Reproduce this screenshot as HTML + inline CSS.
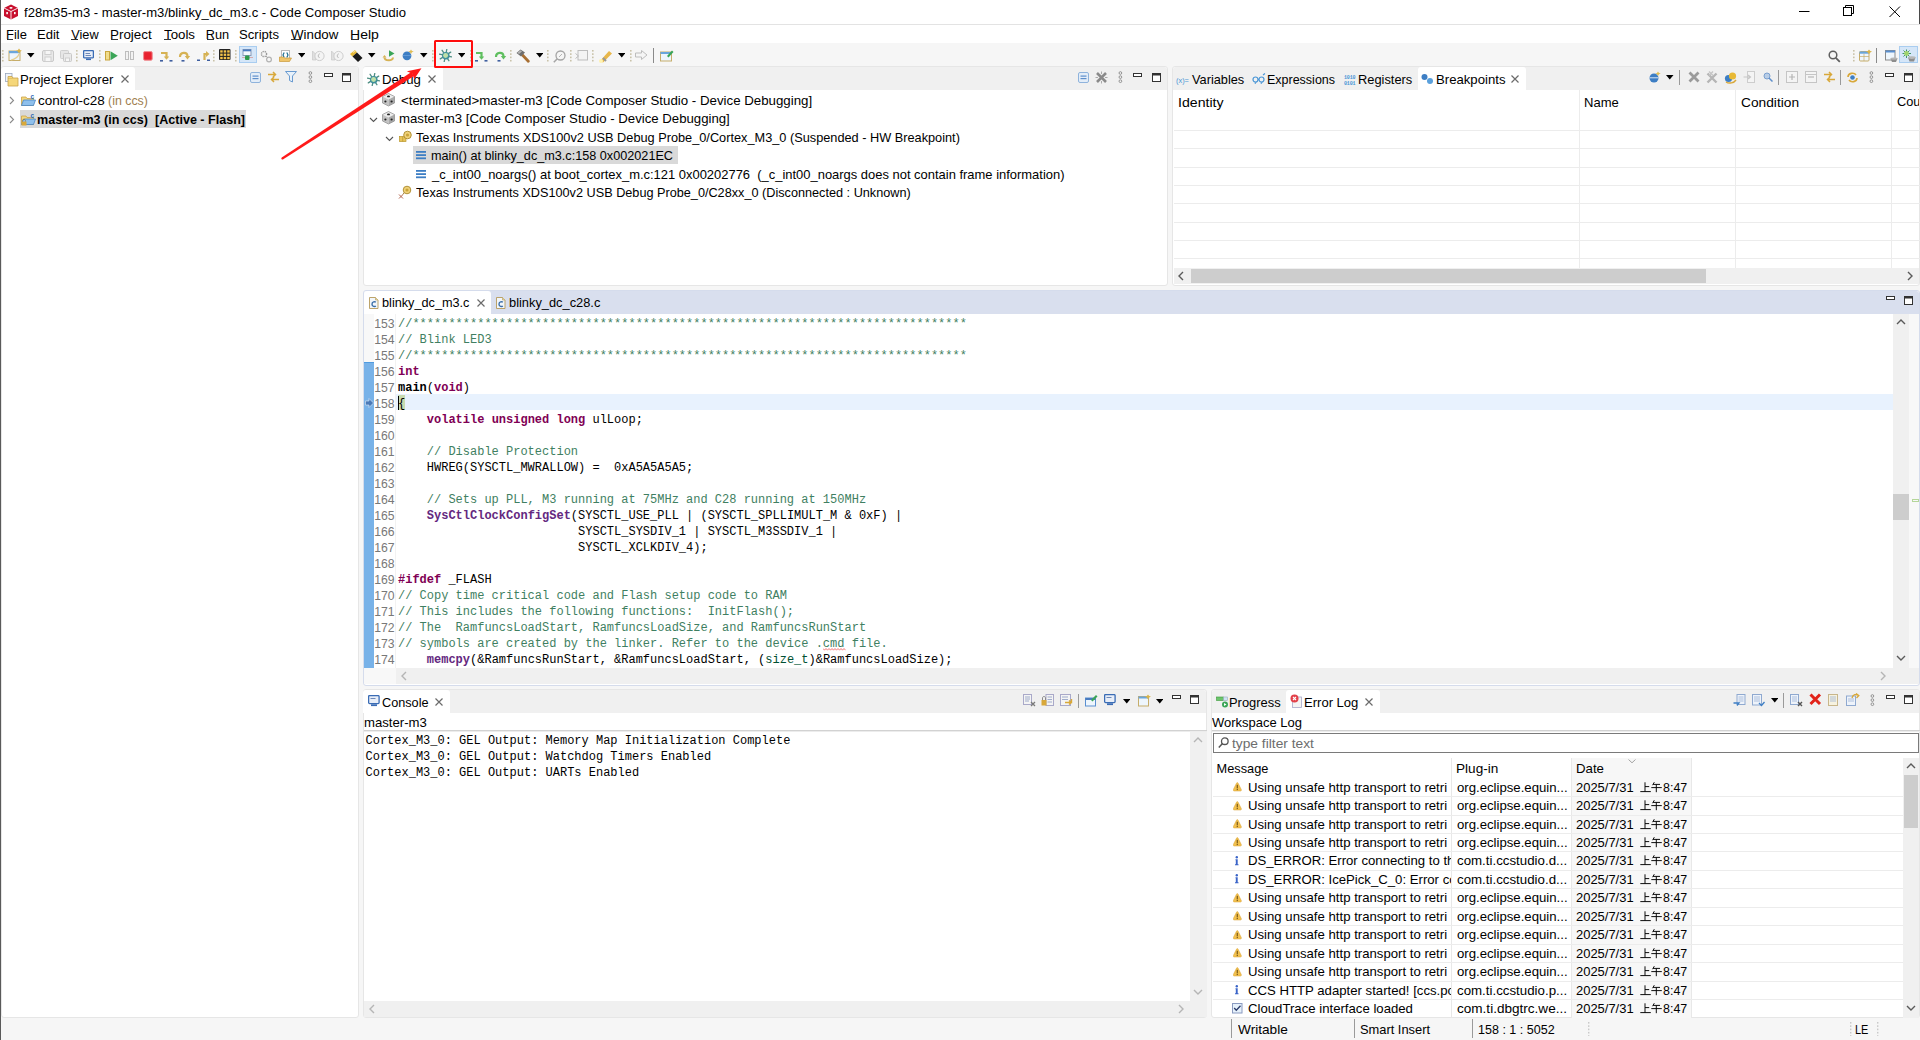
<!DOCTYPE html><html><head><meta charset="utf-8"><style>
*{margin:0;padding:0;box-sizing:border-box}
html,body{width:1920px;height:1040px;overflow:hidden;background:#f6f6f6;font-family:"Liberation Sans",sans-serif}
body>div, body>span, body>svg{position:absolute}
.t{position:absolute;white-space:pre}
</style></head><body><div style="left:0px;top:0px;width:1920px;height:24px;background:#fff"></div><div style="left:0px;top:24px;width:1920px;height:1px;background:#e3e3e3"></div><div style="left:0px;top:25px;width:1920px;height:18px;background:#fff"></div><div style="left:0px;top:43px;width:1920px;height:24px;background:#f6f6f6"></div><span class="t" style="left:24.00px;top:5.60px;font-size:13px;line-height:13px;color:#000;font-weight:400;font-family:'Liberation Sans', sans-serif;transform:scaleX(1.0069);transform-origin:0 0;">f28m35-m3 - master-m3/blinky_dc_m3.c - Code Composer Studio</span><span class="t" style="left:5.99px;top:28.61px;font-size:12.75px;line-height:12.75px;color:#000;font-weight:400;font-family:'Liberation Sans', sans-serif;transform:scaleX(1.0132);transform-origin:0 0;">File</span><span class="t" style="left:36.98px;top:28.61px;font-size:12.75px;line-height:12.75px;color:#000;font-weight:400;font-family:'Liberation Sans', sans-serif;transform:scaleX(1.0238);transform-origin:0 0;">Edit</span><span class="t" style="left:71.25px;top:28.61px;font-size:12.75px;line-height:12.75px;color:#000;font-weight:400;font-family:'Liberation Sans', sans-serif;transform:scaleX(1.0000);transform-origin:0 0;">View</span><span class="t" style="left:109.70px;top:28.61px;font-size:12.75px;line-height:12.75px;color:#000;font-weight:400;font-family:'Liberation Sans', sans-serif;transform:scaleX(1.0513);transform-origin:0 0;">Project</span><span class="t" style="left:163.75px;top:28.61px;font-size:12.75px;line-height:12.75px;color:#000;font-weight:400;font-family:'Liberation Sans', sans-serif;transform:scaleX(1.0417);transform-origin:0 0;">Tools</span><span class="t" style="left:205.75px;top:28.61px;font-size:12.75px;line-height:12.75px;color:#000;font-weight:400;font-family:'Liberation Sans', sans-serif;transform:scaleX(1.0000);transform-origin:0 0;">Run</span><span class="t" style="left:239.47px;top:28.61px;font-size:12.75px;line-height:12.75px;color:#000;font-weight:400;font-family:'Liberation Sans', sans-serif;transform:scaleX(1.0263);transform-origin:0 0;">Scripts</span><span class="t" style="left:291.25px;top:28.61px;font-size:12.75px;line-height:12.75px;color:#000;font-weight:400;font-family:'Liberation Sans', sans-serif;transform:scaleX(1.0435);transform-origin:0 0;">Window</span><span class="t" style="left:349.65px;top:28.61px;font-size:12.75px;line-height:12.75px;color:#000;font-weight:400;font-family:'Liberation Sans', sans-serif;transform:scaleX(1.1000);transform-origin:0 0;">Help</span><div style="left:1px;top:66px;width:358px;height:952px;background:#fff;border:1px solid #e6e6e6;border-radius:3px"></div><div style="left:2px;top:67px;width:356px;height:23px;background:#f0f0f0;border-radius:3px 3px 0 0"></div><div style="left:363px;top:66px;width:805px;height:220px;background:#fff;border:1px solid #e6e6e6;border-radius:3px"></div><div style="left:364px;top:67px;width:803px;height:23px;background:#f0f0f0;border-radius:3px 3px 0 0"></div><div style="left:1172px;top:66px;width:748px;height:220px;background:#fff;border:1px solid #e6e6e6;border-radius:3px"></div><div style="left:1173px;top:67px;width:746px;height:23px;background:#f0f0f0;border-radius:3px 3px 0 0"></div><div style="left:363px;top:290px;width:1557px;height:396px;background:#fff;border:1px solid #d5dcec;border-radius:3px"></div><div style="left:364px;top:291px;width:1555px;height:23px;background:#d9dfee;border-radius:3px 3px 0 0"></div><div style="left:363px;top:689px;width:844px;height:329px;background:#fff;border:1px solid #e6e6e6;border-radius:3px"></div><div style="left:364px;top:690px;width:842px;height:23px;background:#f0f0f0;border-radius:3px 3px 0 0"></div><div style="left:1211px;top:689px;width:709px;height:329px;background:#fff;border:1px solid #e6e6e6;border-radius:3px"></div><div style="left:1212px;top:690px;width:707px;height:23px;background:#f0f0f0;border-radius:3px 3px 0 0"></div><div style="left:1px;top:67px;width:134px;height:23px;background:#fff;border-radius:3px 3px 0 0"></div><span class="t" style="left:19.97px;top:74.21px;font-size:12.75px;line-height:12.75px;color:#000;font-weight:400;font-family:'Liberation Sans', sans-serif;transform:scaleX(1.0300);transform-origin:0 0;">Project Explorer</span><svg style="left:121px;top:75px" width="8" height="8" viewBox="0 0 8 8"><path d="M0.5 0.5L7.5 7.5M7.5 0.5L0.5 7.5" stroke="#6b6b6b" stroke-width="1.2"/></svg><div style="left:363px;top:67px;width:80px;height:23px;background:#fff;border-radius:3px 3px 0 0"></div><span class="t" style="left:381.97px;top:74.21px;font-size:12.75px;line-height:12.75px;color:#000;font-weight:400;font-family:'Liberation Sans', sans-serif;transform:scaleX(1.0333);transform-origin:0 0;">Debug</span><svg style="left:428px;top:75px" width="8" height="8" viewBox="0 0 8 8"><path d="M0.5 0.5L7.5 7.5M7.5 0.5L0.5 7.5" stroke="#6b6b6b" stroke-width="1.2"/></svg><span class="t" style="left:1192.00px;top:74.21px;font-size:12.75px;line-height:12.75px;color:#000;font-weight:400;font-family:'Liberation Sans', sans-serif;transform:scaleX(1.0000);transform-origin:0 0;">Variables</span><span class="t" style="left:1267.42px;top:74.21px;font-size:12.75px;line-height:12.75px;color:#000;font-weight:400;font-family:'Liberation Sans', sans-serif;transform:scaleX(0.9794);transform-origin:0 0;">Expressions</span><span class="t" style="left:1358.39px;top:74.21px;font-size:12.75px;line-height:12.75px;color:#000;font-weight:400;font-family:'Liberation Sans', sans-serif;transform:scaleX(1.0075);transform-origin:0 0;">Registers</span><div style="left:1418px;top:67px;width:108px;height:23px;background:#fff;border-radius:3px 3px 0 0"></div><span class="t" style="left:1435.57px;top:74.21px;font-size:12.75px;line-height:12.75px;color:#000;font-weight:400;font-family:'Liberation Sans', sans-serif;transform:scaleX(1.0318);transform-origin:0 0;">Breakpoints</span><svg style="left:1511px;top:75px" width="8" height="8" viewBox="0 0 8 8"><path d="M0.5 0.5L7.5 7.5M7.5 0.5L0.5 7.5" stroke="#6b6b6b" stroke-width="1.2"/></svg><div style="left:364px;top:291px;width:127px;height:23px;background:#fff;border-radius:3px 3px 0 0"></div><span class="t" style="left:382.00px;top:297.41px;font-size:12.75px;line-height:12.75px;color:#000;font-weight:400;font-family:'Liberation Sans', sans-serif;transform:scaleX(0.9954);transform-origin:0 0;">blinky_dc_m3.c</span><svg style="left:476.6px;top:298.7px" width="8" height="8" viewBox="0 0 8 8"><path d="M0.5 0.5L7.5 7.5M7.5 0.5L0.5 7.5" stroke="#6b6b6b" stroke-width="1.2"/></svg><span class="t" style="left:508.99px;top:297.41px;font-size:12.75px;line-height:12.75px;color:#000;font-weight:400;font-family:'Liberation Sans', sans-serif;transform:scaleX(1.0067);transform-origin:0 0;">blinky_dc_c28.c</span><div style="left:363px;top:690px;width:87px;height:23px;background:#fff;border-radius:3px 3px 0 0"></div><span class="t" style="left:382.00px;top:697.21px;font-size:12.75px;line-height:12.75px;color:#000;font-weight:400;font-family:'Liberation Sans', sans-serif;transform:scaleX(0.9947);transform-origin:0 0;">Console</span><svg style="left:435px;top:698px" width="8" height="8" viewBox="0 0 8 8"><path d="M0.5 0.5L7.5 7.5M7.5 0.5L0.5 7.5" stroke="#6b6b6b" stroke-width="1.2"/></svg><span class="t" style="left:1228.99px;top:697.21px;font-size:12.75px;line-height:12.75px;color:#000;font-weight:400;font-family:'Liberation Sans', sans-serif;transform:scaleX(1.0120);transform-origin:0 0;">Progress</span><div style="left:1286px;top:690px;width:94px;height:23px;background:#fff;border-radius:3px 3px 0 0"></div><span class="t" style="left:1303.98px;top:697.21px;font-size:12.75px;line-height:12.75px;color:#000;font-weight:400;font-family:'Liberation Sans', sans-serif;transform:scaleX(1.0231);transform-origin:0 0;">Error Log</span><svg style="left:1365px;top:698px" width="8" height="8" viewBox="0 0 8 8"><path d="M0.5 0.5L7.5 7.5M7.5 0.5L0.5 7.5" stroke="#6b6b6b" stroke-width="1.2"/></svg><span class="t" style="left:38.20px;top:95.21px;font-size:12.75px;line-height:12.75px;color:#000;font-weight:400;font-family:'Liberation Sans', sans-serif;transform:scaleX(1.0587);transform-origin:0 0;">control-c28</span><span class="t" style="left:108.43px;top:95.21px;font-size:12.75px;line-height:12.75px;color:#a08050;font-weight:400;font-family:'Liberation Sans', sans-serif;transform:scaleX(0.9725);transform-origin:0 0;">(in ccs)</span><div style="left:20px;top:110px;width:226px;height:18px;background:#d9d9d9"></div><span class="t" style="left:37.21px;top:113.71px;font-size:12.75px;line-height:12.75px;color:#000;font-weight:700;font-family:'Liberation Sans', sans-serif;transform:scaleX(0.9852);transform-origin:0 0;">master-m3 (in ccs)  [Active - Flash]</span><span class="t" style="left:401.00px;top:94.71px;font-size:12.75px;line-height:12.75px;color:#000;font-weight:400;font-family:'Liberation Sans', sans-serif;transform:scaleX(1.0416);transform-origin:0 0;">&lt;terminated&gt;master-m3 [Code Composer Studio - Device Debugging]</span><span class="t" style="left:398.77px;top:113.21px;font-size:12.75px;line-height:12.75px;color:#000;font-weight:400;font-family:'Liberation Sans', sans-serif;transform:scaleX(1.0349);transform-origin:0 0;">master-m3 [Code Composer Studio - Device Debugging]</span><span class="t" style="left:416.00px;top:131.71px;font-size:12.75px;line-height:12.75px;color:#000;font-weight:400;font-family:'Liberation Sans', sans-serif;transform:scaleX(0.9993);transform-origin:0 0;">Texas Instruments XDS100v2 USB Debug Probe_0/Cortex_M3_0 (Suspended - HW Breakpoint)</span><div style="left:413px;top:146px;width:265px;height:18px;background:#d9d9d9"></div><span class="t" style="left:430.51px;top:150.21px;font-size:12.75px;line-height:12.75px;color:#000;font-weight:400;font-family:'Liberation Sans', sans-serif;transform:scaleX(0.9926);transform-origin:0 0;">main() at blinky_dc_m3.c:158 0x002021EC</span><span class="t" style="left:431.50px;top:168.71px;font-size:12.75px;line-height:12.75px;color:#000;font-weight:400;font-family:'Liberation Sans', sans-serif;transform:scaleX(1.0152);transform-origin:0 0;">_c_int00_noargs() at boot_cortex_m.c:121 0x00202776  (_c_int00_noargs does not contain frame information)</span><span class="t" style="left:416.00px;top:187.21px;font-size:12.75px;line-height:12.75px;color:#000;font-weight:400;font-family:'Liberation Sans', sans-serif;transform:scaleX(0.9944);transform-origin:0 0;">Texas Instruments XDS100v2 USB Debug Probe_0/C28xx_0 (Disconnected : Unknown)</span><div style="left:1174px;top:130px;width:746px;height:1px;background:#ececec"></div><div style="left:1174px;top:148.4px;width:746px;height:1px;background:#ececec"></div><div style="left:1174px;top:166.7px;width:746px;height:1px;background:#ececec"></div><div style="left:1174px;top:185px;width:746px;height:1px;background:#ececec"></div><div style="left:1174px;top:203.3px;width:746px;height:1px;background:#ececec"></div><div style="left:1174px;top:221.7px;width:746px;height:1px;background:#ececec"></div><div style="left:1174px;top:240px;width:746px;height:1px;background:#ececec"></div><div style="left:1174px;top:258.4px;width:746px;height:1px;background:#ececec"></div><div style="left:1579px;top:90px;width:1px;height:178px;background:#ececec"></div><div style="left:1735px;top:90px;width:1px;height:178px;background:#ececec"></div><div style="left:1891px;top:90px;width:1px;height:178px;background:#ececec"></div><span class="t" style="left:1177.89px;top:96.81px;font-size:12.75px;line-height:12.75px;color:#000;font-weight:400;font-family:'Liberation Sans', sans-serif;transform:scaleX(1.1075);transform-origin:0 0;">Identity</span><span class="t" style="left:1584.28px;top:96.81px;font-size:12.75px;line-height:12.75px;color:#000;font-weight:400;font-family:'Liberation Sans', sans-serif;transform:scaleX(1.0212);transform-origin:0 0;">Name</span><span class="t" style="left:1741.00px;top:96.81px;font-size:12.75px;line-height:12.75px;color:#000;font-weight:400;font-family:'Liberation Sans', sans-serif;transform:scaleX(1.0774);transform-origin:0 0;">Condition</span><div style="left:1891px;top:90px;width:28px;height:40px;overflow:hidden"><span class="t" style="left:6px;top:5.5px;font-size:12.75px;line-height:12.75px">Count</span></div><div style="left:1174px;top:268px;width:745px;height:16px;background:#f0f0f0"></div><div style="left:1191px;top:269px;width:515px;height:14px;background:#cdcdcd"></div><div style="left:364px;top:314px;width:10px;height:354px;background:#f8f8f8"></div><div style="left:364px;top:362px;width:10px;height:306px;background:#78b2e8"></div><div style="left:364px;top:362px;width:10px;height:1px;background:#4f9be0"></div><div style="left:374px;top:314px;width:22px;height:354px;background:#fff"></div><div style="left:395px;top:314px;width:1px;height:354px;background:#f2f2f2"></div><div style="left:396px;top:394px;width:1497px;height:16px;background:#e8f2fe"></div><div style="left:1893px;top:314px;width:16px;height:354px;background:#f0f0f0"></div><div style="left:1909px;top:314px;width:10px;height:354px;background:#f8f8f8"></div><div style="left:1893px;top:494px;width:16px;height:26px;background:#cdcdcd"></div><div style="left:364px;top:668px;width:1555px;height:16px;background:#f0f0f0"></div><div style="left:364px;top:668px;width:32px;height:16px;background:#f8f8f8"></div><div style="left:398px;top:395px;width:7px;height:15px;background:#c7dbb0"></div><span class="t" style="left:340px;width:54.6px;text-align:right;top:318.10px;font-size:12.2px;line-height:12.2px;color:#787878;font-family:'Liberation Sans', sans-serif">153</span><span class="t" style="left:398px;top:316.20px;font-size:12px;line-height:16px;font-family:'Liberation Mono', monospace;color:#000"><span style="color:#3f7f62;font-weight:400">//*****************************************************************************</span></span><span class="t" style="left:340px;width:54.6px;text-align:right;top:334.10px;font-size:12.2px;line-height:12.2px;color:#787878;font-family:'Liberation Sans', sans-serif">154</span><span class="t" style="left:398px;top:332.20px;font-size:12px;line-height:16px;font-family:'Liberation Mono', monospace;color:#000"><span style="color:#3f7f62;font-weight:400">// Blink LED3</span></span><span class="t" style="left:340px;width:54.6px;text-align:right;top:350.10px;font-size:12.2px;line-height:12.2px;color:#787878;font-family:'Liberation Sans', sans-serif">155</span><span class="t" style="left:398px;top:348.20px;font-size:12px;line-height:16px;font-family:'Liberation Mono', monospace;color:#000"><span style="color:#3f7f62;font-weight:400">//*****************************************************************************</span></span><span class="t" style="left:340px;width:54.6px;text-align:right;top:366.10px;font-size:12.2px;line-height:12.2px;color:#787878;font-family:'Liberation Sans', sans-serif">156</span><span class="t" style="left:398px;top:364.20px;font-size:12px;line-height:16px;font-family:'Liberation Mono', monospace;color:#000"><span style="color:#7f0055;font-weight:700">int</span></span><span class="t" style="left:340px;width:54.6px;text-align:right;top:382.10px;font-size:12.2px;line-height:12.2px;color:#787878;font-family:'Liberation Sans', sans-serif">157</span><span class="t" style="left:398px;top:380.20px;font-size:12px;line-height:16px;font-family:'Liberation Mono', monospace;color:#000"><span style="color:#000;font-weight:700">main</span><span style="color:#000;font-weight:400">(</span><span style="color:#7f0055;font-weight:700">void</span><span style="color:#000;font-weight:400">)</span></span><span class="t" style="left:340px;width:54.6px;text-align:right;top:398.10px;font-size:12.2px;line-height:12.2px;color:#787878;font-family:'Liberation Sans', sans-serif">158</span><span class="t" style="left:398px;top:396.20px;font-size:12px;line-height:16px;font-family:'Liberation Mono', monospace;color:#000">{</span><span class="t" style="left:340px;width:54.6px;text-align:right;top:414.10px;font-size:12.2px;line-height:12.2px;color:#787878;font-family:'Liberation Sans', sans-serif">159</span><span class="t" style="left:398px;top:412.20px;font-size:12px;line-height:16px;font-family:'Liberation Mono', monospace;color:#000"><span style="color:#000;font-weight:400">    </span><span style="color:#7f0055;font-weight:700">volatile</span><span style="color:#000;font-weight:400"> </span><span style="color:#7f0055;font-weight:700">unsigned</span><span style="color:#000;font-weight:400"> </span><span style="color:#7f0055;font-weight:700">long</span><span style="color:#000;font-weight:400"> ulLoop;</span></span><span class="t" style="left:340px;width:54.6px;text-align:right;top:430.10px;font-size:12.2px;line-height:12.2px;color:#787878;font-family:'Liberation Sans', sans-serif">160</span><span class="t" style="left:340px;width:54.6px;text-align:right;top:446.10px;font-size:12.2px;line-height:12.2px;color:#787878;font-family:'Liberation Sans', sans-serif">161</span><span class="t" style="left:398px;top:444.20px;font-size:12px;line-height:16px;font-family:'Liberation Mono', monospace;color:#000"><span style="color:#3f7f62;font-weight:400">    // Disable Protection</span></span><span class="t" style="left:340px;width:54.6px;text-align:right;top:462.10px;font-size:12.2px;line-height:12.2px;color:#787878;font-family:'Liberation Sans', sans-serif">162</span><span class="t" style="left:398px;top:460.20px;font-size:12px;line-height:16px;font-family:'Liberation Mono', monospace;color:#000"><span style="color:#000;font-weight:400">    HWREG(SYSCTL_MWRALLOW) =  0xA5A5A5A5;</span></span><span class="t" style="left:340px;width:54.6px;text-align:right;top:478.10px;font-size:12.2px;line-height:12.2px;color:#787878;font-family:'Liberation Sans', sans-serif">163</span><span class="t" style="left:340px;width:54.6px;text-align:right;top:494.10px;font-size:12.2px;line-height:12.2px;color:#787878;font-family:'Liberation Sans', sans-serif">164</span><span class="t" style="left:398px;top:492.20px;font-size:12px;line-height:16px;font-family:'Liberation Mono', monospace;color:#000"><span style="color:#3f7f62;font-weight:400">    // Sets up PLL, M3 running at 75MHz and C28 running at 150MHz</span></span><span class="t" style="left:340px;width:54.6px;text-align:right;top:510.10px;font-size:12.2px;line-height:12.2px;color:#787878;font-family:'Liberation Sans', sans-serif">165</span><span class="t" style="left:398px;top:508.20px;font-size:12px;line-height:16px;font-family:'Liberation Mono', monospace;color:#000"><span style="color:#000;font-weight:400">    </span><span style="color:#642880;font-weight:700">SysCtlClockConfigSet</span><span style="color:#000;font-weight:400">(SYSCTL_USE_PLL | (SYSCTL_SPLLIMULT_M &amp; 0xF) |</span></span><span class="t" style="left:340px;width:54.6px;text-align:right;top:526.10px;font-size:12.2px;line-height:12.2px;color:#787878;font-family:'Liberation Sans', sans-serif">166</span><span class="t" style="left:398px;top:524.20px;font-size:12px;line-height:16px;font-family:'Liberation Mono', monospace;color:#000"><span style="color:#000;font-weight:400">                         SYSCTL_SYSDIV_1 | SYSCTL_M3SSDIV_1 |</span></span><span class="t" style="left:340px;width:54.6px;text-align:right;top:542.10px;font-size:12.2px;line-height:12.2px;color:#787878;font-family:'Liberation Sans', sans-serif">167</span><span class="t" style="left:398px;top:540.20px;font-size:12px;line-height:16px;font-family:'Liberation Mono', monospace;color:#000"><span style="color:#000;font-weight:400">                         SYSCTL_XCLKDIV_4);</span></span><span class="t" style="left:340px;width:54.6px;text-align:right;top:558.10px;font-size:12.2px;line-height:12.2px;color:#787878;font-family:'Liberation Sans', sans-serif">168</span><span class="t" style="left:340px;width:54.6px;text-align:right;top:574.10px;font-size:12.2px;line-height:12.2px;color:#787878;font-family:'Liberation Sans', sans-serif">169</span><span class="t" style="left:398px;top:572.20px;font-size:12px;line-height:16px;font-family:'Liberation Mono', monospace;color:#000"><span style="color:#7f0055;font-weight:700">#ifdef</span><span style="color:#000;font-weight:400"> _FLASH</span></span><span class="t" style="left:340px;width:54.6px;text-align:right;top:590.10px;font-size:12.2px;line-height:12.2px;color:#787878;font-family:'Liberation Sans', sans-serif">170</span><span class="t" style="left:398px;top:588.20px;font-size:12px;line-height:16px;font-family:'Liberation Mono', monospace;color:#000"><span style="color:#3f7f62;font-weight:400">// Copy time critical code and Flash setup code to RAM</span></span><span class="t" style="left:340px;width:54.6px;text-align:right;top:606.10px;font-size:12.2px;line-height:12.2px;color:#787878;font-family:'Liberation Sans', sans-serif">171</span><span class="t" style="left:398px;top:604.20px;font-size:12px;line-height:16px;font-family:'Liberation Mono', monospace;color:#000"><span style="color:#3f7f62;font-weight:400">// This includes the following functions:  InitFlash();</span></span><span class="t" style="left:340px;width:54.6px;text-align:right;top:622.10px;font-size:12.2px;line-height:12.2px;color:#787878;font-family:'Liberation Sans', sans-serif">172</span><span class="t" style="left:398px;top:620.20px;font-size:12px;line-height:16px;font-family:'Liberation Mono', monospace;color:#000"><span style="color:#3f7f62;font-weight:400">// The  RamfuncsLoadStart, RamfuncsLoadSize, and RamfuncsRunStart</span></span><span class="t" style="left:340px;width:54.6px;text-align:right;top:638.10px;font-size:12.2px;line-height:12.2px;color:#787878;font-family:'Liberation Sans', sans-serif">173</span><span class="t" style="left:398px;top:636.20px;font-size:12px;line-height:16px;font-family:'Liberation Mono', monospace;color:#000"><span style="color:#3f7f62;font-weight:400">// symbols are created by the linker. Refer to the device .cmd file.</span></span><span class="t" style="left:340px;width:54.6px;text-align:right;top:654.10px;font-size:12.2px;line-height:12.2px;color:#787878;font-family:'Liberation Sans', sans-serif">174</span><span class="t" style="left:398px;top:652.20px;font-size:12px;line-height:16px;font-family:'Liberation Mono', monospace;color:#000"><span style="color:#000;font-weight:400">    </span><span style="color:#642880;font-weight:700">memcpy</span><span style="color:#000;font-weight:400">(&amp;RamfuncsRunStart, &amp;RamfuncsLoadStart, (</span><span style="color:#005032;font-weight:400">size_t</span><span style="color:#000;font-weight:400">)&amp;RamfuncsLoadSize);</span></span><div style="left:398px;top:396px;width:1px;height:14px;background:#000"></div><span class="t" style="left:364.27px;top:717.21px;font-size:12.75px;line-height:12.75px;color:#000;font-weight:400;font-family:'Liberation Sans', sans-serif;transform:scaleX(1.0317);transform-origin:0 0;">master-m3</span><div style="left:364px;top:730px;width:843px;height:1px;background:#d2d2d2"></div><div style="left:364px;top:731px;width:843px;height:1px;background:#ececec"></div><span class="t" style="left:365.5px;top:732.60px;font-size:12px;line-height:16px;font-family:'Liberation Mono', monospace;color:#000">Cortex_M3_0: GEL Output: Memory Map Initialization Complete</span><span class="t" style="left:365.5px;top:748.60px;font-size:12px;line-height:16px;font-family:'Liberation Mono', monospace;color:#000">Cortex_M3_0: GEL Output: Watchdog Timers Enabled</span><span class="t" style="left:365.5px;top:764.60px;font-size:12px;line-height:16px;font-family:'Liberation Mono', monospace;color:#000">Cortex_M3_0: GEL Output: UARTs Enabled</span><div style="left:1190px;top:732px;width:17px;height:269px;background:#f0f0f0"></div><div style="left:364px;top:1001px;width:843px;height:16px;background:#f0f0f0"></div><span class="t" style="left:1212.40px;top:717.01px;font-size:12.75px;line-height:12.75px;color:#000;font-weight:400;font-family:'Liberation Sans', sans-serif;transform:scaleX(1.0182);transform-origin:0 0;">Workspace Log</span><div style="left:1212px;top:730px;width:708px;height:1px;background:#d2d2d2"></div><div style="left:1212px;top:731px;width:708px;height:1px;background:#ececec"></div><div style="left:1213px;top:733px;width:706px;height:20px;background:#fff;border:1px solid #7a7a7a"></div><span class="t" style="left:1231.90px;top:737.71px;font-size:12.75px;line-height:12.75px;color:#6d6d6d;font-weight:400;font-family:'Liberation Sans', sans-serif;transform:scaleX(1.0803);transform-origin:0 0;">type filter text</span><div style="left:1571px;top:758px;width:120px;height:260px;background:#f7f7f7"></div><div style="left:1451px;top:758px;width:1px;height:260px;background:#e8e8e8"></div><div style="left:1571px;top:758px;width:1px;height:260px;background:#e8e8e8"></div><div style="left:1691px;top:758px;width:1px;height:260px;background:#e8e8e8"></div><span class="t" style="left:1216.60px;top:763.21px;font-size:12.75px;line-height:12.75px;color:#000;font-weight:400;font-family:'Liberation Sans', sans-serif;transform:scaleX(1.0000);transform-origin:0 0;">Message</span><span class="t" style="left:1455.73px;top:763.21px;font-size:12.75px;line-height:12.75px;color:#000;font-weight:400;font-family:'Liberation Sans', sans-serif;transform:scaleX(1.0658);transform-origin:0 0;">Plug-in</span><span class="t" style="left:1575.76px;top:763.21px;font-size:12.75px;line-height:12.75px;color:#000;font-weight:400;font-family:'Liberation Sans', sans-serif;transform:scaleX(1.0385);transform-origin:0 0;">Date</span><div style="left:1217px;top:778.40px;width:234px;height:18px;overflow:hidden"><span class="t" style="left:30.60px;top:3.21px;font-size:12.75px;line-height:12.75px;color:#000;font-weight:400;font-family:'Liberation Sans', sans-serif;transform:scaleX(1.0327);transform-origin:0 0">Using unsafe http transport to retri</span></div><span class="t" style="left:1456.80px;top:781.61px;font-size:12.75px;line-height:12.75px;color:#000;font-weight:400;font-family:'Liberation Sans', sans-serif;transform:scaleX(1.0330);transform-origin:0 0;">org.eclipse.equin...</span><span class="t" style="left:1576.40px;top:781.61px;font-size:12.75px;line-height:12.75px;color:#000;font-weight:400;font-family:'Liberation Sans', sans-serif;transform:scaleX(1.0158);transform-origin:0 0;">2025/7/31</span><span class="t" style="left:1663.40px;top:781.61px;font-size:12.75px;line-height:12.75px;color:#000;font-weight:400;font-family:'Liberation Sans', sans-serif;transform:scaleX(0.9760);transform-origin:0 0;">8:47</span><div style="left:1213px;top:796px;width:690px;height:1px;background:#ececec"></div><div style="left:1217px;top:796.85px;width:234px;height:18px;overflow:hidden"><span class="t" style="left:30.60px;top:3.21px;font-size:12.75px;line-height:12.75px;color:#000;font-weight:400;font-family:'Liberation Sans', sans-serif;transform:scaleX(1.0327);transform-origin:0 0">Using unsafe http transport to retri</span></div><span class="t" style="left:1456.80px;top:800.06px;font-size:12.75px;line-height:12.75px;color:#000;font-weight:400;font-family:'Liberation Sans', sans-serif;transform:scaleX(1.0330);transform-origin:0 0;">org.eclipse.equin...</span><span class="t" style="left:1576.40px;top:800.06px;font-size:12.75px;line-height:12.75px;color:#000;font-weight:400;font-family:'Liberation Sans', sans-serif;transform:scaleX(1.0158);transform-origin:0 0;">2025/7/31</span><span class="t" style="left:1663.40px;top:800.06px;font-size:12.75px;line-height:12.75px;color:#000;font-weight:400;font-family:'Liberation Sans', sans-serif;transform:scaleX(0.9760);transform-origin:0 0;">8:47</span><div style="left:1213px;top:815px;width:690px;height:1px;background:#ececec"></div><div style="left:1217px;top:815.30px;width:234px;height:18px;overflow:hidden"><span class="t" style="left:30.60px;top:3.21px;font-size:12.75px;line-height:12.75px;color:#000;font-weight:400;font-family:'Liberation Sans', sans-serif;transform:scaleX(1.0327);transform-origin:0 0">Using unsafe http transport to retri</span></div><span class="t" style="left:1456.80px;top:818.51px;font-size:12.75px;line-height:12.75px;color:#000;font-weight:400;font-family:'Liberation Sans', sans-serif;transform:scaleX(1.0330);transform-origin:0 0;">org.eclipse.equin...</span><span class="t" style="left:1576.40px;top:818.51px;font-size:12.75px;line-height:12.75px;color:#000;font-weight:400;font-family:'Liberation Sans', sans-serif;transform:scaleX(1.0158);transform-origin:0 0;">2025/7/31</span><span class="t" style="left:1663.40px;top:818.51px;font-size:12.75px;line-height:12.75px;color:#000;font-weight:400;font-family:'Liberation Sans', sans-serif;transform:scaleX(0.9760);transform-origin:0 0;">8:47</span><div style="left:1213px;top:833px;width:690px;height:1px;background:#ececec"></div><div style="left:1217px;top:833.75px;width:234px;height:18px;overflow:hidden"><span class="t" style="left:30.60px;top:3.21px;font-size:12.75px;line-height:12.75px;color:#000;font-weight:400;font-family:'Liberation Sans', sans-serif;transform:scaleX(1.0327);transform-origin:0 0">Using unsafe http transport to retri</span></div><span class="t" style="left:1456.80px;top:836.96px;font-size:12.75px;line-height:12.75px;color:#000;font-weight:400;font-family:'Liberation Sans', sans-serif;transform:scaleX(1.0330);transform-origin:0 0;">org.eclipse.equin...</span><span class="t" style="left:1576.40px;top:836.96px;font-size:12.75px;line-height:12.75px;color:#000;font-weight:400;font-family:'Liberation Sans', sans-serif;transform:scaleX(1.0158);transform-origin:0 0;">2025/7/31</span><span class="t" style="left:1663.40px;top:836.96px;font-size:12.75px;line-height:12.75px;color:#000;font-weight:400;font-family:'Liberation Sans', sans-serif;transform:scaleX(0.9760);transform-origin:0 0;">8:47</span><div style="left:1213px;top:851px;width:690px;height:1px;background:#ececec"></div><div style="left:1217px;top:852.20px;width:234px;height:18px;overflow:hidden"><span class="t" style="left:30.60px;top:3.21px;font-size:12.75px;line-height:12.75px;color:#000;font-weight:400;font-family:'Liberation Sans', sans-serif;transform:scaleX(1.0327);transform-origin:0 0">DS_ERROR: Error connecting to the</span></div><span class="t" style="left:1456.80px;top:855.41px;font-size:12.75px;line-height:12.75px;color:#000;font-weight:400;font-family:'Liberation Sans', sans-serif;transform:scaleX(1.0429);transform-origin:0 0;">com.ti.ccstudio.d...</span><span class="t" style="left:1576.40px;top:855.41px;font-size:12.75px;line-height:12.75px;color:#000;font-weight:400;font-family:'Liberation Sans', sans-serif;transform:scaleX(1.0158);transform-origin:0 0;">2025/7/31</span><span class="t" style="left:1663.40px;top:855.41px;font-size:12.75px;line-height:12.75px;color:#000;font-weight:400;font-family:'Liberation Sans', sans-serif;transform:scaleX(0.9760);transform-origin:0 0;">8:47</span><div style="left:1213px;top:870px;width:690px;height:1px;background:#ececec"></div><div style="left:1217px;top:870.65px;width:234px;height:18px;overflow:hidden"><span class="t" style="left:30.60px;top:3.21px;font-size:12.75px;line-height:12.75px;color:#000;font-weight:400;font-family:'Liberation Sans', sans-serif;transform:scaleX(1.0327);transform-origin:0 0">DS_ERROR: IcePick_C_0: Error conn</span></div><span class="t" style="left:1456.80px;top:873.86px;font-size:12.75px;line-height:12.75px;color:#000;font-weight:400;font-family:'Liberation Sans', sans-serif;transform:scaleX(1.0429);transform-origin:0 0;">com.ti.ccstudio.d...</span><span class="t" style="left:1576.40px;top:873.86px;font-size:12.75px;line-height:12.75px;color:#000;font-weight:400;font-family:'Liberation Sans', sans-serif;transform:scaleX(1.0158);transform-origin:0 0;">2025/7/31</span><span class="t" style="left:1663.40px;top:873.86px;font-size:12.75px;line-height:12.75px;color:#000;font-weight:400;font-family:'Liberation Sans', sans-serif;transform:scaleX(0.9760);transform-origin:0 0;">8:47</span><div style="left:1213px;top:888px;width:690px;height:1px;background:#ececec"></div><div style="left:1217px;top:889.10px;width:234px;height:18px;overflow:hidden"><span class="t" style="left:30.60px;top:3.21px;font-size:12.75px;line-height:12.75px;color:#000;font-weight:400;font-family:'Liberation Sans', sans-serif;transform:scaleX(1.0327);transform-origin:0 0">Using unsafe http transport to retri</span></div><span class="t" style="left:1456.80px;top:892.31px;font-size:12.75px;line-height:12.75px;color:#000;font-weight:400;font-family:'Liberation Sans', sans-serif;transform:scaleX(1.0330);transform-origin:0 0;">org.eclipse.equin...</span><span class="t" style="left:1576.40px;top:892.31px;font-size:12.75px;line-height:12.75px;color:#000;font-weight:400;font-family:'Liberation Sans', sans-serif;transform:scaleX(1.0158);transform-origin:0 0;">2025/7/31</span><span class="t" style="left:1663.40px;top:892.31px;font-size:12.75px;line-height:12.75px;color:#000;font-weight:400;font-family:'Liberation Sans', sans-serif;transform:scaleX(0.9760);transform-origin:0 0;">8:47</span><div style="left:1213px;top:907px;width:690px;height:1px;background:#ececec"></div><div style="left:1217px;top:907.55px;width:234px;height:18px;overflow:hidden"><span class="t" style="left:30.60px;top:3.21px;font-size:12.75px;line-height:12.75px;color:#000;font-weight:400;font-family:'Liberation Sans', sans-serif;transform:scaleX(1.0327);transform-origin:0 0">Using unsafe http transport to retri</span></div><span class="t" style="left:1456.80px;top:910.76px;font-size:12.75px;line-height:12.75px;color:#000;font-weight:400;font-family:'Liberation Sans', sans-serif;transform:scaleX(1.0330);transform-origin:0 0;">org.eclipse.equin...</span><span class="t" style="left:1576.40px;top:910.76px;font-size:12.75px;line-height:12.75px;color:#000;font-weight:400;font-family:'Liberation Sans', sans-serif;transform:scaleX(1.0158);transform-origin:0 0;">2025/7/31</span><span class="t" style="left:1663.40px;top:910.76px;font-size:12.75px;line-height:12.75px;color:#000;font-weight:400;font-family:'Liberation Sans', sans-serif;transform:scaleX(0.9760);transform-origin:0 0;">8:47</span><div style="left:1213px;top:925px;width:690px;height:1px;background:#ececec"></div><div style="left:1217px;top:926.00px;width:234px;height:18px;overflow:hidden"><span class="t" style="left:30.60px;top:3.21px;font-size:12.75px;line-height:12.75px;color:#000;font-weight:400;font-family:'Liberation Sans', sans-serif;transform:scaleX(1.0327);transform-origin:0 0">Using unsafe http transport to retri</span></div><span class="t" style="left:1456.80px;top:929.21px;font-size:12.75px;line-height:12.75px;color:#000;font-weight:400;font-family:'Liberation Sans', sans-serif;transform:scaleX(1.0330);transform-origin:0 0;">org.eclipse.equin...</span><span class="t" style="left:1576.40px;top:929.21px;font-size:12.75px;line-height:12.75px;color:#000;font-weight:400;font-family:'Liberation Sans', sans-serif;transform:scaleX(1.0158);transform-origin:0 0;">2025/7/31</span><span class="t" style="left:1663.40px;top:929.21px;font-size:12.75px;line-height:12.75px;color:#000;font-weight:400;font-family:'Liberation Sans', sans-serif;transform:scaleX(0.9760);transform-origin:0 0;">8:47</span><div style="left:1213px;top:944px;width:690px;height:1px;background:#ececec"></div><div style="left:1217px;top:944.45px;width:234px;height:18px;overflow:hidden"><span class="t" style="left:30.60px;top:3.21px;font-size:12.75px;line-height:12.75px;color:#000;font-weight:400;font-family:'Liberation Sans', sans-serif;transform:scaleX(1.0327);transform-origin:0 0">Using unsafe http transport to retri</span></div><span class="t" style="left:1456.80px;top:947.66px;font-size:12.75px;line-height:12.75px;color:#000;font-weight:400;font-family:'Liberation Sans', sans-serif;transform:scaleX(1.0330);transform-origin:0 0;">org.eclipse.equin...</span><span class="t" style="left:1576.40px;top:947.66px;font-size:12.75px;line-height:12.75px;color:#000;font-weight:400;font-family:'Liberation Sans', sans-serif;transform:scaleX(1.0158);transform-origin:0 0;">2025/7/31</span><span class="t" style="left:1663.40px;top:947.66px;font-size:12.75px;line-height:12.75px;color:#000;font-weight:400;font-family:'Liberation Sans', sans-serif;transform:scaleX(0.9760);transform-origin:0 0;">8:47</span><div style="left:1213px;top:962px;width:690px;height:1px;background:#ececec"></div><div style="left:1217px;top:962.90px;width:234px;height:18px;overflow:hidden"><span class="t" style="left:30.60px;top:3.21px;font-size:12.75px;line-height:12.75px;color:#000;font-weight:400;font-family:'Liberation Sans', sans-serif;transform:scaleX(1.0327);transform-origin:0 0">Using unsafe http transport to retri</span></div><span class="t" style="left:1456.80px;top:966.11px;font-size:12.75px;line-height:12.75px;color:#000;font-weight:400;font-family:'Liberation Sans', sans-serif;transform:scaleX(1.0330);transform-origin:0 0;">org.eclipse.equin...</span><span class="t" style="left:1576.40px;top:966.11px;font-size:12.75px;line-height:12.75px;color:#000;font-weight:400;font-family:'Liberation Sans', sans-serif;transform:scaleX(1.0158);transform-origin:0 0;">2025/7/31</span><span class="t" style="left:1663.40px;top:966.11px;font-size:12.75px;line-height:12.75px;color:#000;font-weight:400;font-family:'Liberation Sans', sans-serif;transform:scaleX(0.9760);transform-origin:0 0;">8:47</span><div style="left:1213px;top:981px;width:690px;height:1px;background:#ececec"></div><div style="left:1217px;top:981.35px;width:234px;height:18px;overflow:hidden"><span class="t" style="left:30.60px;top:3.21px;font-size:12.75px;line-height:12.75px;color:#000;font-weight:400;font-family:'Liberation Sans', sans-serif;transform:scaleX(1.0327);transform-origin:0 0">CCS HTTP adapter started! [ccs.por</span></div><span class="t" style="left:1456.80px;top:984.56px;font-size:12.75px;line-height:12.75px;color:#000;font-weight:400;font-family:'Liberation Sans', sans-serif;transform:scaleX(1.0429);transform-origin:0 0;">com.ti.ccstudio.p...</span><span class="t" style="left:1576.40px;top:984.56px;font-size:12.75px;line-height:12.75px;color:#000;font-weight:400;font-family:'Liberation Sans', sans-serif;transform:scaleX(1.0158);transform-origin:0 0;">2025/7/31</span><span class="t" style="left:1663.40px;top:984.56px;font-size:12.75px;line-height:12.75px;color:#000;font-weight:400;font-family:'Liberation Sans', sans-serif;transform:scaleX(0.9760);transform-origin:0 0;">8:47</span><div style="left:1213px;top:999px;width:690px;height:1px;background:#ececec"></div><div style="left:1217px;top:999.80px;width:234px;height:18px;overflow:hidden"><span class="t" style="left:30.60px;top:3.21px;font-size:12.75px;line-height:12.75px;color:#000;font-weight:400;font-family:'Liberation Sans', sans-serif;transform:scaleX(1.0327);transform-origin:0 0">CloudTrace interface loaded</span></div><span class="t" style="left:1456.80px;top:1003.01px;font-size:12.75px;line-height:12.75px;color:#000;font-weight:400;font-family:'Liberation Sans', sans-serif;transform:scaleX(1.0631);transform-origin:0 0;">com.ti.dbgtrc.we...</span><span class="t" style="left:1576.40px;top:1003.01px;font-size:12.75px;line-height:12.75px;color:#000;font-weight:400;font-family:'Liberation Sans', sans-serif;transform:scaleX(1.0158);transform-origin:0 0;">2025/7/31</span><span class="t" style="left:1663.40px;top:1003.01px;font-size:12.75px;line-height:12.75px;color:#000;font-weight:400;font-family:'Liberation Sans', sans-serif;transform:scaleX(0.9760);transform-origin:0 0;">8:47</span><div style="left:1213px;top:1018px;width:690px;height:1px;background:#ececec"></div><div style="left:1903px;top:758px;width:16px;height:260px;background:#f0f0f0"></div><div style="left:1904px;top:775px;width:14px;height:53px;background:#cdcdcd"></div><div style="left:0px;top:1018px;width:1920px;height:22px;background:#f6f6f6"></div><div style="left:1231px;top:1019px;width:1px;height:19px;background:#9a9a9a"></div><div style="left:1354px;top:1019px;width:1px;height:19px;background:#9a9a9a"></div><div style="left:1472px;top:1019px;width:1px;height:19px;background:#9a9a9a"></div><span class="t" style="left:1237.80px;top:1023.71px;font-size:12.75px;line-height:12.75px;color:#000;font-weight:400;font-family:'Liberation Sans', sans-serif;transform:scaleX(1.0696);transform-origin:0 0;">Writable</span><span class="t" style="left:1359.99px;top:1023.71px;font-size:12.75px;line-height:12.75px;color:#000;font-weight:400;font-family:'Liberation Sans', sans-serif;transform:scaleX(1.0087);transform-origin:0 0;">Smart Insert</span><span class="t" style="left:1478.32px;top:1023.71px;font-size:12.75px;line-height:12.75px;color:#000;font-weight:400;font-family:'Liberation Sans', sans-serif;transform:scaleX(0.9831);transform-origin:0 0;">158 : 1 : 5052</span><span class="t" style="left:1854.54px;top:1023.71px;font-size:12.75px;line-height:12.75px;color:#000;font-weight:400;font-family:'Liberation Sans', sans-serif;transform:scaleX(0.8571);transform-origin:0 0;">LE</span><svg style="left:3px;top:4px;" width="16" height="16" viewBox="0 0 16 16"><path d="M8 0.5L15 4V12L8 15.5L1 12V4Z" fill="#c8102e"/><path d="M8 7.5L15 4M8 7.5L1 4M8 7.5V15.5" stroke="#fff" stroke-width="0.9" fill="none"/><ellipse cx="8" cy="3.8" rx="1.6" ry="0.9" fill="#fff"/><rect x="3.3" y="8" width="1.6" height="2.2" fill="#fff"/><rect x="11" y="8" width="1.6" height="2.2" fill="#fff"/></svg><svg style="left:1799px;top:10px;" width="11" height="3" viewBox="0 0 11 3"><rect x="0" y="1" width="10.5" height="1" fill="#000"/></svg><svg style="left:1843px;top:5px;" width="12" height="12" viewBox="0 0 12 12"><rect x="0.5" y="2.5" width="8" height="8" fill="none" stroke="#000"/><path d="M2.5 2.5V0.5H10.5V8.5H8.5" fill="none" stroke="#000"/></svg><svg style="left:1889px;top:5.5px;" width="12" height="12" viewBox="0 0 12 12"><path d="M0.5 0.5L11 11M11 0.5L0.5 11" stroke="#000" stroke-width="1"/></svg><div style="left:7px;top:39px;width:6px;height:1px;background:#333"></div><div style="left:71px;top:39px;width:7px;height:1px;background:#333"></div><div style="left:111px;top:39px;width:7px;height:1px;background:#333"></div><div style="left:164px;top:39px;width:7px;height:1px;background:#333"></div><div style="left:207px;top:39px;width:7px;height:1px;background:#333"></div><div style="left:291px;top:39px;width:10px;height:1px;background:#333"></div><div style="left:351px;top:39px;width:8px;height:1px;background:#333"></div><svg style="left:1.7px;top:50px;" width="2" height="12" viewBox="0 0 2 12"><rect x="0" y="0.0" width="1.6" height="1.6" fill="#c9c2a9"/><rect x="0" y="3.3" width="1.6" height="1.6" fill="#c9c2a9"/><rect x="0" y="6.6" width="1.6" height="1.6" fill="#c9c2a9"/><rect x="0" y="9.9" width="1.6" height="1.6" fill="#c9c2a9"/></svg><svg style="left:8px;top:48px;" width="14" height="14" viewBox="0 0 14 14"><rect x="1" y="3" width="11" height="9.5" fill="#eef6fd" stroke="#c6ad6a"/><rect x="1" y="3" width="11" height="2.2" fill="#6aa6dc"/><path d="M3 12C8 11 10 9 11 6" stroke="#e6cf8f" stroke-width="1.2" fill="none"/><path d="M11 0.5L12.3 2.2L14 2.8L12.3 3.6L11 5.5L9.8 3.6L8 2.8L9.8 2.2Z" fill="#d9b44a"/></svg><svg style="left:27.3px;top:53.3px;" width="7.5" height="5" viewBox="0 0 7.5 5"><path d="M0 0H7.5L3.75 4.4Z" fill="#000"/></svg><svg style="left:42px;top:49.5px;" width="12" height="12" viewBox="0 0 12 12"><rect x="0.5" y="0.5" width="11" height="11" rx="1.5" fill="#e9e9e9" stroke="#c8c8c8"/><rect x="3" y="0.5" width="6" height="4" fill="#f6f6f6" stroke="#cfcfcf"/><rect x="3" y="7" width="6" height="4.5" fill="#f6f6f6" stroke="#cfcfcf"/></svg><svg style="left:60px;top:49.5px;" width="12" height="12" viewBox="0 0 12 12"><rect x="0.5" y="0.5" width="8" height="8" rx="1" fill="#e6e6e6" stroke="#cfcfcf"/><rect x="3.5" y="3.5" width="8" height="8" rx="1" fill="#e9e9e9" stroke="#c8c8c8"/><rect x="5.5" y="8" width="4" height="3.5" fill="#f6f6f6" stroke="#cfcfcf"/></svg><svg style="left:76.4px;top:50px;" width="2" height="12" viewBox="0 0 2 12"><rect x="0" y="0.0" width="1.6" height="1.6" fill="#c9c2a9"/><rect x="0" y="3.3" width="1.6" height="1.6" fill="#c9c2a9"/><rect x="0" y="6.6" width="1.6" height="1.6" fill="#c9c2a9"/><rect x="0" y="9.9" width="1.6" height="1.6" fill="#c9c2a9"/></svg><svg style="left:83px;top:49.5px;" width="11" height="11" viewBox="0 0 11 11"><rect x="0.6" y="0.6" width="9.8" height="7.3" rx="1" fill="#e8eef8" stroke="#3a6cb5" stroke-width="1.3"/><rect x="2.5" y="3" width="4.5" height="1" fill="#6d88b8"/><rect x="2.5" y="5" width="5.5" height="1" fill="#6d88b8"/><rect x="3" y="8.5" width="5" height="1.6" fill="#3a6cb5"/></svg><svg style="left:98.60000000000001px;top:50px;" width="2" height="12" viewBox="0 0 2 12"><rect x="0" y="0.0" width="1.6" height="1.6" fill="#c9c2a9"/><rect x="0" y="3.3" width="1.6" height="1.6" fill="#c9c2a9"/><rect x="0" y="6.6" width="1.6" height="1.6" fill="#c9c2a9"/><rect x="0" y="9.9" width="1.6" height="1.6" fill="#c9c2a9"/></svg><svg style="left:104.5px;top:50.5px;" width="13" height="10" viewBox="0 0 13 10"><rect x="0.5" y="0.5" width="4" height="8.5" fill="#f1dc8a" stroke="#c9a63e"/><path d="M5.5 0.3L12.8 4.8L5.5 9.3Z" fill="#3aa557"/></svg><svg style="left:124.5px;top:51px;" width="10" height="9" viewBox="0 0 10 9"><rect x="0.5" y="0.5" width="3" height="8" fill="#f2f2f2" stroke="#bdbdbd"/><rect x="5.5" y="0.5" width="3" height="8" fill="#f2f2f2" stroke="#bdbdbd"/></svg><svg style="left:142.8px;top:50.8px;" width="10" height="10" viewBox="0 0 10 10"><rect x="0.6" y="0.6" width="8.6" height="8.6" rx="1.2" fill="#e8222f" stroke="#f08a90" stroke-width="1"/></svg><svg style="left:159.8px;top:50.5px;" width="13" height="11" viewBox="0 0 13 11"><path d="M1 2H6.5V6" stroke="#d6b254" stroke-width="2.2" fill="none"/><path d="M3.8 5.5H9.2L6.5 8.8Z" fill="#d6b254"/><rect x="0" y="9" width="3" height="1.6" fill="#3f5f9f"/><rect x="9.5" y="9" width="3" height="1.6" fill="#3f5f9f"/></svg><svg style="left:178px;top:50.5px;" width="13" height="11" viewBox="0 0 13 11"><path d="M2 6C2 1 9 0.5 9.5 5" stroke="#d6b254" stroke-width="2.2" fill="none"/><path d="M6.8 5H12.2L9.5 8.5Z" fill="#d6b254"/><rect x="3.5" y="9" width="3" height="1.6" fill="#3f5f9f"/></svg><svg style="left:196.6px;top:50px;" width="13" height="11" viewBox="0 0 13 11"><path d="M7.5 10V4H10" stroke="#d6b254" stroke-width="2.2" fill="none"/><path d="M9 1L12.5 4L9 7Z" fill="#d6b254"/><rect x="0" y="9.5" width="3" height="1.6" fill="#3f5f9f"/><rect x="10" y="9.5" width="3" height="1.6" fill="#3f5f9f"/></svg><svg style="left:213.0px;top:50px;" width="2" height="12" viewBox="0 0 2 12"><rect x="0" y="0.0" width="1.6" height="1.6" fill="#c9c2a9"/><rect x="0" y="3.3" width="1.6" height="1.6" fill="#c9c2a9"/><rect x="0" y="6.6" width="1.6" height="1.6" fill="#c9c2a9"/><rect x="0" y="9.9" width="1.6" height="1.6" fill="#c9c2a9"/></svg><svg style="left:218.8px;top:49.2px;" width="12" height="11.5" viewBox="0 0 12 11.5"><rect x="0" y="0" width="11.5" height="11" rx="1" fill="#222"/><rect x="1.2" y="1.3" width="2.5" height="2.3" fill="#f3c24a"/><rect x="1.2" y="4.6" width="2.5" height="2.3" fill="#f3c24a"/><rect x="1.2" y="7.8999999999999995" width="2.5" height="2.3" fill="#f3c24a"/><rect x="4.7" y="1.3" width="2.5" height="2.3" fill="#f3c24a"/><rect x="4.7" y="4.6" width="2.5" height="2.3" fill="#f3c24a"/><rect x="4.7" y="7.8999999999999995" width="2.5" height="2.3" fill="#f3c24a"/><rect x="8.2" y="1.3" width="2.5" height="2.3" fill="#f3c24a"/><rect x="8.2" y="4.6" width="2.5" height="2.3" fill="#f3c24a"/><rect x="8.2" y="7.8999999999999995" width="2.5" height="2.3" fill="#f3c24a"/></svg><svg style="left:235.2px;top:50px;" width="2" height="12" viewBox="0 0 2 12"><rect x="0" y="0.0" width="1.6" height="1.6" fill="#c9c2a9"/><rect x="0" y="3.3" width="1.6" height="1.6" fill="#c9c2a9"/><rect x="0" y="6.6" width="1.6" height="1.6" fill="#c9c2a9"/><rect x="0" y="9.9" width="1.6" height="1.6" fill="#c9c2a9"/></svg><div style="left:238.5px;top:46px;width:18.5px;height:17px;background:#d5e6f8;border:1px solid #a9cdf0"></div><svg style="left:242px;top:48.5px;" width="11" height="12" viewBox="0 0 11 12"><rect x="1" y="0.5" width="8" height="6" fill="#f4f8fd" stroke="#8a9bb8"/><rect x="1" y="0.5" width="8" height="1.8" fill="#4a7cc0"/><path d="M0 8.5H11" stroke="#d49a9a" stroke-width="0.8"/><rect x="3" y="6.5" width="4.5" height="4.5" rx="1" fill="#2e9a4a"/></svg><svg style="left:260px;top:49.5px;" width="13" height="13" viewBox="0 0 13 13"><circle cx="4" cy="4" r="2.6" fill="none" stroke="#9a9a9a" stroke-width="1.4" stroke-dasharray="1.3 0.8"/><circle cx="9" cy="9.5" r="2.4" fill="none" stroke="#b3b3b3" stroke-width="1.2"/><path d="M6 6L8 8" stroke="#aaa"/></svg><svg style="left:278.5px;top:49.5px;" width="13" height="12" viewBox="0 0 13 12"><rect x="2.5" y="0.5" width="8" height="9" fill="#fff" stroke="#b8b8b8"/><path d="M5.2 2.5L4 5L5.2 7.5M7.8 2.5L9 5L7.8 7.5" stroke="#1f6f8f" stroke-width="1.2" fill="none"/><path d="M0.5 7H4.5L5.5 8H12.5L10.5 11.5H0.5Z" fill="#f0c56a" stroke="#c99a3a" stroke-width="0.7"/></svg><svg style="left:297.5px;top:53.3px;" width="7.5" height="5" viewBox="0 0 7.5 5"><path d="M0 0H7.5L3.75 4.4Z" fill="#000"/></svg><svg style="left:310.6px;top:49.5px;" width="14" height="12" viewBox="0 0 14 12"><path d="M1.5 1L5 4.5V10H1.5Z" fill="#e0e0e0" stroke="#c9c9c9" stroke-width="0.7"/><circle cx="8.5" cy="6" r="4.6" fill="#f4f4f4" stroke="#cdcdcd" stroke-width="1"/><path d="M8.5 3.5L7 6L8.5 8" stroke="#bdbdbd" fill="none"/></svg><svg style="left:330px;top:49.5px;" width="14" height="12" viewBox="0 0 14 12"><path d="M1.5 1L5 4.5V10H1.5Z" fill="#e0e0e0" stroke="#c9c9c9" stroke-width="0.7"/><circle cx="8.5" cy="6" r="4.6" fill="#f4f4f4" stroke="#cdcdcd" stroke-width="1"/><path d="M8.5 3.5L7 6L8.5 8" stroke="#bdbdbd" fill="none"/></svg><svg style="left:348.5px;top:48.7px;" width="15" height="14" viewBox="0 0 15 14"><path d="M1 5L6 1L8 3.5L3.5 7.5Z" fill="#e6b935"/><path d="M3.5 7.5L8 3.5L13.5 9L9 13Z" fill="#1a1a1a"/><path d="M4 3.5L6.5 2" stroke="#fff" stroke-width="0.6"/></svg><svg style="left:368px;top:53.3px;" width="7.5" height="5" viewBox="0 0 7.5 5"><path d="M0 0H7.5L3.75 4.4Z" fill="#000"/></svg><svg style="left:381.8px;top:49px;" width="14" height="13" viewBox="0 0 14 13"><path d="M7 1.2L12.5 4.5L7 7.8Z" fill="#3aa557"/><path d="M2.5 8.5C2.5 12 11 12.5 11 8.5" stroke="#d6b254" stroke-width="2" fill="none"/><path d="M0.5 8.5L2.5 6L4.5 8.5" fill="#d6b254"/></svg><svg style="left:401.8px;top:49.3px;" width="12" height="12" viewBox="0 0 12 12"><circle cx="5" cy="6.8" r="4.4" fill="#3d7ec4"/><path d="M1 6.5H9" stroke="#6aa0da" stroke-width="0.8"/><path d="M9 0.5L10 2L11.8 2.6L10 3.3L9 5L8 3.3L6.3 2.6L8 2Z" fill="#e0bd55"/></svg><svg style="left:420px;top:53.3px;" width="7.5" height="5" viewBox="0 0 7.5 5"><path d="M0 0H7.5L3.75 4.4Z" fill="#000"/></svg><svg style="left:432.2px;top:50px;" width="2" height="12" viewBox="0 0 2 12"><rect x="0" y="0.0" width="1.6" height="1.6" fill="#c9c2a9"/><rect x="0" y="3.3" width="1.6" height="1.6" fill="#c9c2a9"/><rect x="0" y="6.6" width="1.6" height="1.6" fill="#c9c2a9"/><rect x="0" y="9.9" width="1.6" height="1.6" fill="#c9c2a9"/></svg><svg style="left:439px;top:49px;" width="13" height="13" viewBox="0 0 13 13"><path d="M8.95 7.02L12.56 7.79M7.86 8.60L9.88 11.70M5.98 8.95L5.21 12.56M4.40 7.86L1.30 9.88M4.05 5.98L0.44 5.21M5.14 4.40L3.12 1.30M7.02 4.05L7.79 0.44M8.60 5.14L11.70 3.12" stroke="#4f8f84" stroke-width="1.3" stroke-linecap="round"/><circle cx="6.8" cy="6.8" r="3.77" fill="#3f8f9c"/><circle cx="6.6" cy="6.5" r="2.47" fill="#bfe0a8"/></svg><svg style="left:457.5px;top:53.3px;" width="7.5" height="5" viewBox="0 0 7.5 5"><path d="M0 0H7.5L3.75 4.4Z" fill="#000"/></svg><svg style="left:469.7px;top:50px;" width="2" height="12" viewBox="0 0 2 12"><rect x="0" y="0.0" width="1.6" height="1.6" fill="#c9c2a9"/><rect x="0" y="3.3" width="1.6" height="1.6" fill="#c9c2a9"/><rect x="0" y="6.6" width="1.6" height="1.6" fill="#c9c2a9"/><rect x="0" y="9.9" width="1.6" height="1.6" fill="#c9c2a9"/></svg><svg style="left:475px;top:50.5px;" width="14" height="11" viewBox="0 0 14 11"><path d="M1 2H6.5V6" stroke="#5fbf5f" stroke-width="2.2" fill="none"/><path d="M3.8 5.5H9.2L6.5 8.8Z" fill="#5fbf5f"/><rect x="0" y="9" width="3" height="1.6" fill="#3f5f9f"/><rect x="9.5" y="9" width="3" height="1.6" fill="#3f5f9f"/></svg><svg style="left:493.8px;top:50.5px;" width="14" height="11" viewBox="0 0 14 11"><path d="M2 6C2 1 9 0.5 9.5 5" stroke="#5fbf5f" stroke-width="2.2" fill="none"/><path d="M6.8 5H12.2L9.5 8.5Z" fill="#5fbf5f"/><rect x="3.5" y="9" width="3" height="1.6" fill="#3f5f9f"/></svg><svg style="left:510.2px;top:50px;" width="2" height="12" viewBox="0 0 2 12"><rect x="0" y="0.0" width="1.6" height="1.6" fill="#c9c2a9"/><rect x="0" y="3.3" width="1.6" height="1.6" fill="#c9c2a9"/><rect x="0" y="6.6" width="1.6" height="1.6" fill="#c9c2a9"/><rect x="0" y="9.9" width="1.6" height="1.6" fill="#c9c2a9"/></svg><svg style="left:516px;top:48.5px;" width="14" height="14" viewBox="0 0 14 14"><path d="M5.5 5L12.3 12.2" stroke="#a86f32" stroke-width="2.8" stroke-linecap="round"/><path d="M0.5 4L4.5 0.5L9 3.5L5 7.5Z" fill="#6f6f6f"/><path d="M1.5 3.8L4.5 1.3L6 2.4L3 5Z" fill="#b5b5b5"/></svg><svg style="left:535.5px;top:53.3px;" width="7.5" height="5" viewBox="0 0 7.5 5"><path d="M0 0H7.5L3.75 4.4Z" fill="#000"/></svg><svg style="left:546.7px;top:50px;" width="2" height="12" viewBox="0 0 2 12"><rect x="0" y="0.0" width="1.6" height="1.6" fill="#c9c2a9"/><rect x="0" y="3.3" width="1.6" height="1.6" fill="#c9c2a9"/><rect x="0" y="6.6" width="1.6" height="1.6" fill="#c9c2a9"/><rect x="0" y="9.9" width="1.6" height="1.6" fill="#c9c2a9"/></svg><svg style="left:552.5px;top:49.5px;" width="13" height="13" viewBox="0 0 13 13"><circle cx="7.5" cy="5.5" r="4.5" fill="none" stroke="#a5a5a5" stroke-width="1.3"/><path d="M4.3 8.8L0.8 12.3" stroke="#a5a5a5" stroke-width="1.5"/><path d="M6 7L9 4" stroke="#b5b5b5"/></svg><svg style="left:569.7px;top:50px;" width="2" height="12" viewBox="0 0 2 12"><rect x="0" y="0.0" width="1.6" height="1.6" fill="#c9c2a9"/><rect x="0" y="3.3" width="1.6" height="1.6" fill="#c9c2a9"/><rect x="0" y="6.6" width="1.6" height="1.6" fill="#c9c2a9"/><rect x="0" y="9.9" width="1.6" height="1.6" fill="#c9c2a9"/></svg><svg style="left:575px;top:49.5px;" width="13" height="11" viewBox="0 0 13 11"><rect x="3" y="0.5" width="9.5" height="9.5" fill="#f4f4f4" stroke="#bdbdbd"/><path d="M0.5 3.5L3.5 6L0.5 8.5" stroke="#bdbdbd" fill="none"/></svg><svg style="left:592.2px;top:50px;" width="2" height="12" viewBox="0 0 2 12"><rect x="0" y="0.0" width="1.6" height="1.6" fill="#c9c2a9"/><rect x="0" y="3.3" width="1.6" height="1.6" fill="#c9c2a9"/><rect x="0" y="6.6" width="1.6" height="1.6" fill="#c9c2a9"/><rect x="0" y="9.9" width="1.6" height="1.6" fill="#c9c2a9"/></svg><svg style="left:597.5px;top:49px;" width="15" height="14" viewBox="0 0 15 14"><path d="M2 12L11 2L14 4.5L5 13.5Z" fill="#e8b74a"/><path d="M5 9L8 12" stroke="#999" stroke-width="2"/><circle cx="3" cy="12" r="2" fill="#fff3b0"/></svg><svg style="left:617.5px;top:53.3px;" width="7.5" height="5" viewBox="0 0 7.5 5"><path d="M0 0H7.5L3.75 4.4Z" fill="#000"/></svg><svg style="left:629.7px;top:50px;" width="2" height="12" viewBox="0 0 2 12"><rect x="0" y="0.0" width="1.6" height="1.6" fill="#c9c2a9"/><rect x="0" y="3.3" width="1.6" height="1.6" fill="#c9c2a9"/><rect x="0" y="6.6" width="1.6" height="1.6" fill="#c9c2a9"/><rect x="0" y="9.9" width="1.6" height="1.6" fill="#c9c2a9"/></svg><svg style="left:635px;top:50px;" width="13" height="10" viewBox="0 0 13 10"><path d="M0.5 3H6.5V0.5L12 5L6.5 9.5V7H0.5Z" fill="#f5f5f5" stroke="#bdbdbd"/></svg><div style="left:653px;top:48px;width:1px;height:15px;background:#8a8a8a"></div><svg style="left:659.5px;top:49px;" width="14" height="13" viewBox="0 0 14 13"><rect x="0.5" y="3" width="11" height="9" fill="#eef6fd" stroke="#c6ad6a"/><rect x="0.5" y="3" width="11" height="2" fill="#6aa6dc"/><path d="M7 7L12 1.5L13.5 3L8.5 8.5Z" fill="#3aa557"/></svg><svg style="left:1828px;top:49.5px;" width="13" height="13" viewBox="0 0 13 13"><circle cx="5" cy="5" r="3.8" fill="none" stroke="#5f5f5f" stroke-width="1.5"/><path d="M7.8 7.8L11.8 11.8" stroke="#5f5f5f" stroke-width="1.8"/></svg><svg style="left:1853.0px;top:50px;" width="2" height="12" viewBox="0 0 2 12"><rect x="0" y="0.0" width="1.6" height="1.6" fill="#c9c2a9"/><rect x="0" y="3.3" width="1.6" height="1.6" fill="#c9c2a9"/><rect x="0" y="6.6" width="1.6" height="1.6" fill="#c9c2a9"/><rect x="0" y="9.9" width="1.6" height="1.6" fill="#c9c2a9"/></svg><svg style="left:1859px;top:49px;" width="13" height="13" viewBox="0 0 13 13"><rect x="0.5" y="2.5" width="9.5" height="9.5" rx="1" fill="#eef6fd" stroke="#c6ad6a"/><rect x="0.5" y="2.5" width="9.5" height="2.2" fill="#6aa6dc"/><path d="M0.5 7.5H10M5 4.7V12" stroke="#c6ad6a" stroke-width="0.7"/><path d="M10 0.5L11.3 2L13 2.6L11.3 3.4L10 5.2L8.8 3.4L7 2.6L8.8 2Z" fill="#d9b44a"/></svg><div style="left:1876px;top:48px;width:1px;height:15px;background:#8a8a8a"></div><svg style="left:1885px;top:49.5px;" width="13" height="13" viewBox="0 0 13 13"><rect x="0.5" y="0.5" width="9.5" height="9.5" fill="#eef6fd" stroke="#8a8a8a"/><rect x="0.5" y="0.5" width="9.5" height="2" fill="#5a8fd0"/><path d="M5.5 8.5H12.5L11 12H7Z" fill="#8d8d8d"/><ellipse cx="9" cy="8.6" rx="3.5" ry="1.2" fill="#b5b5b5"/></svg><div style="left:1899px;top:46.3px;width:19px;height:16.5px;background:#d5e6f8;border:1px solid #a9cdf0"></div><svg style="left:1902px;top:48.5px;" width="14" height="13" viewBox="0 0 14 13"><g stroke="#2f8a5a" stroke-width="0.9"><path d="M4.5 0.5V9M0.5 4.5H9M1.5 1.5L7.5 7.5M7.5 1.5L1.5 7.5"/></g><circle cx="4.5" cy="4.5" r="2.4" fill="#9fd36a"/><path d="M6 8.5H13.5L12 12.5H7.5Z" fill="#8d8d8d"/><ellipse cx="9.8" cy="8.6" rx="3.8" ry="1.3" fill="#b9b9b9"/></svg><svg style="left:250px;top:71.5px;" width="11" height="11" viewBox="0 0 11 11"><rect x="0.5" y="0.5" width="10" height="10" rx="1.5" fill="#e3edf8" stroke="#8fb3dc"/><rect x="2.5" y="3.5" width="6" height="1.2" fill="#5f8fcb"/><rect x="2.5" y="6" width="6" height="1.2" fill="#5f8fcb"/></svg><svg style="left:266.5px;top:71px;" width="13" height="12" viewBox="0 0 13 12"><path d="M1 3.5H8M6 1L8.5 3.5L6 6" stroke="#d8a83a" stroke-width="1.5" fill="none"/><path d="M12 8.5H5M7 6L4.5 8.5L7 11" stroke="#d8a83a" stroke-width="1.5" fill="none"/></svg><svg style="left:285px;top:71px;" width="12" height="12" viewBox="0 0 12 12"><path d="M0.5 0.5H11.5L7.5 5V11L4.5 9.5V5Z" fill="#e8f1fa" stroke="#6a9bd0"/></svg><svg style="left:307.5px;top:71px;" width="5" height="13" viewBox="0 0 5 13"><circle cx="2.4" cy="2" r="1.35" fill="none" stroke="#8a8a8a" stroke-width="0.9"/><circle cx="2.4" cy="6.1" r="1.35" fill="none" stroke="#8a8a8a" stroke-width="0.9"/><circle cx="2.4" cy="10.2" r="1.35" fill="none" stroke="#8a8a8a" stroke-width="0.9"/></svg><svg style="left:324px;top:73px;" width="10" height="5" viewBox="0 0 10 5"><rect x="0.5" y="0.5" width="8" height="3" fill="#fff" stroke="#333" stroke-width="1"/></svg><svg style="left:342px;top:73px;" width="10" height="10" viewBox="0 0 10 10"><rect x="0.5" y="0.5" width="8" height="8" fill="#fff" stroke="#333" stroke-width="1"/><rect x="0.5" y="0.5" width="8" height="2" fill="#333"/></svg><svg style="left:1078px;top:72px;" width="11" height="11" viewBox="0 0 11 11"><rect x="0.5" y="0.5" width="10" height="10" rx="1.5" fill="#e3edf8" stroke="#8fb3dc"/><rect x="2.5" y="3.5" width="6" height="1.2" fill="#5f8fcb"/><rect x="2.5" y="6" width="6" height="1.2" fill="#5f8fcb"/></svg><svg style="left:1095px;top:70.5px;" width="13" height="13" viewBox="0 0 13 13"><path d="M2 2L11 11M11 2L2 11" stroke="#8a8a8a" stroke-width="2.6"/><path d="M6.5 0.5V3M0.5 6.5H3M10 6.5H12.5M6.5 10V12.5" stroke="#aaa"/></svg><svg style="left:1117.5px;top:71px;" width="5" height="13" viewBox="0 0 5 13"><circle cx="2.4" cy="2" r="1.35" fill="none" stroke="#8a8a8a" stroke-width="0.9"/><circle cx="2.4" cy="6.1" r="1.35" fill="none" stroke="#8a8a8a" stroke-width="0.9"/><circle cx="2.4" cy="10.2" r="1.35" fill="none" stroke="#8a8a8a" stroke-width="0.9"/></svg><svg style="left:1133px;top:73px;" width="10" height="5" viewBox="0 0 10 5"><rect x="0.5" y="0.5" width="8" height="3" fill="#fff" stroke="#333" stroke-width="1"/></svg><svg style="left:1152px;top:73px;" width="10" height="10" viewBox="0 0 10 10"><rect x="0.5" y="0.5" width="8" height="8" fill="#fff" stroke="#333" stroke-width="1"/><rect x="0.5" y="0.5" width="8" height="2" fill="#333"/></svg><svg style="left:1648.5px;top:71px;" width="12" height="12" viewBox="0 0 12 12"><circle cx="5" cy="7" r="4.5" fill="#3d7ec4"/><path d="M0.8 6.8H9.2" stroke="#fff" stroke-width="0.8"/><path d="M9 0.5L10 2L11.8 2.6L10 3.3L9 5L8 3.3L6.3 2.6L8 2Z" fill="#e0bd55"/></svg><svg style="left:1666px;top:75px;" width="7.5" height="5" viewBox="0 0 7.5 5"><path d="M0 0H7.5L3.75 4.4Z" fill="#000"/></svg><div style="left:1679px;top:70px;width:1px;height:15px;background:#9a9a9a"></div><svg style="left:1687.5px;top:71px;" width="12" height="12" viewBox="0 0 12 12"><path d="M1.5 1.5L10.5 10.5M10.5 1.5L1.5 10.5" stroke="#9a9a9a" stroke-width="2.8"/></svg><svg style="left:1706px;top:70.5px;" width="12" height="13" viewBox="0 0 12 13"><path d="M1.5 2.5L10.5 11.5M10.5 2.5L1.5 11.5" stroke="#b5b5b5" stroke-width="2.4"/><path d="M3 0.5L7 4.5M7 0.5L3 4.5" stroke="#c5c5c5" stroke-width="1.4"/></svg><svg style="left:1723.8px;top:70.5px;" width="13" height="13" viewBox="0 0 13 13"><circle cx="4.5" cy="7.5" r="3.6" fill="#3d7ec4"/><circle cx="8.5" cy="5" r="3.6" fill="#e8b935"/><path d="M2 11C5 13 10 12 12 9" stroke="#d8a83a" stroke-width="1.4" fill="none"/></svg><svg style="left:1742.5px;top:71px;" width="12" height="12" viewBox="0 0 12 12"><rect x="4.5" y="0.5" width="7" height="11" fill="#f4f4f4" stroke="#cdcdcd"/><path d="M0.5 6H7M5 4L7.5 6L5 8" stroke="#c5c5c5" stroke-width="1.2" fill="none"/></svg><svg style="left:1762.5px;top:72px;" width="10" height="10" viewBox="0 0 10 10"><circle cx="4" cy="4" r="3" fill="#b8cde6" stroke="#7a9fcf"/><path d="M6 6L9.5 9.5" stroke="#5f8fcb" stroke-width="1.5"/></svg><div style="left:1778px;top:70px;width:1px;height:15px;background:#9a9a9a"></div><svg style="left:1786px;top:71px;" width="12" height="12" viewBox="0 0 12 12"><rect x="0.5" y="0.5" width="11" height="11" fill="#f4f4f4" stroke="#c5c5c5"/><path d="M6 3V9M3 6H9" stroke="#b5b5b5" stroke-width="1.2"/></svg><svg style="left:1805px;top:71px;" width="12" height="12" viewBox="0 0 12 12"><rect x="0.5" y="0.5" width="11" height="11" fill="#f4f4f4" stroke="#c5c5c5"/><path d="M3 6H9" stroke="#b5b5b5" stroke-width="1.2"/><path d="M0.5 3.5H11.5" stroke="#c5c5c5"/></svg><svg style="left:1822.5px;top:71px;" width="13" height="12" viewBox="0 0 13 12"><path d="M1 3.5H8M6 1L8.5 3.5L6 6" stroke="#d8a83a" stroke-width="1.5" fill="none"/><path d="M12 8.5H5M7 6L4.5 8.5L7 11" stroke="#d8a83a" stroke-width="1.5" fill="none"/></svg><div style="left:1839.5px;top:70px;width:1px;height:15px;background:#9a9a9a"></div><svg style="left:1846px;top:70.5px;" width="13" height="13" viewBox="0 0 13 13"><path d="M2 6C2 2 8 1 10 4" stroke="#d8a83a" stroke-width="1.6" fill="none"/><path d="M11 7C11 11 5 12 3 9" stroke="#d8a83a" stroke-width="1.6" fill="none"/><circle cx="6.5" cy="6.5" r="2.3" fill="#3d7ec4"/></svg><svg style="left:1869px;top:71px;" width="5" height="13" viewBox="0 0 5 13"><circle cx="2.4" cy="2" r="1.35" fill="none" stroke="#8a8a8a" stroke-width="0.9"/><circle cx="2.4" cy="6.1" r="1.35" fill="none" stroke="#8a8a8a" stroke-width="0.9"/><circle cx="2.4" cy="10.2" r="1.35" fill="none" stroke="#8a8a8a" stroke-width="0.9"/></svg><svg style="left:1885px;top:73px;" width="10" height="5" viewBox="0 0 10 5"><rect x="0.5" y="0.5" width="8" height="3" fill="#fff" stroke="#333" stroke-width="1"/></svg><svg style="left:1904px;top:73px;" width="10" height="10" viewBox="0 0 10 10"><rect x="0.5" y="0.5" width="8" height="8" fill="#fff" stroke="#333" stroke-width="1"/><rect x="0.5" y="0.5" width="8" height="2" fill="#333"/></svg><svg style="left:1886px;top:296px;" width="10" height="5" viewBox="0 0 10 5"><rect x="0.5" y="0.5" width="8" height="3" fill="#fff" stroke="#333" stroke-width="1"/></svg><svg style="left:1904px;top:296px;" width="10" height="10" viewBox="0 0 10 10"><rect x="0.5" y="0.5" width="8" height="8" fill="#fff" stroke="#333" stroke-width="1"/><rect x="0.5" y="0.5" width="8" height="2" fill="#333"/></svg><svg style="left:1023px;top:694px;" width="13" height="13" viewBox="0 0 13 13"><rect x="0.5" y="0.5" width="8" height="10" fill="#f4f4f4" stroke="#a9a9c9"/><path d="M2 3H7M2 5H7M2 7H6" stroke="#8a9ac0" stroke-width="0.8"/><path d="M8 8L12 12M12 8L8 12" stroke="#7a7a7a" stroke-width="1.3"/></svg><svg style="left:1041px;top:694px;" width="13" height="13" viewBox="0 0 13 13"><rect x="5" y="0.5" width="7.5" height="11" fill="#f4f4f4" stroke="#a9a9c9"/><path d="M6.5 3H11M6.5 5.5H11M6.5 8H11" stroke="#8a9ac0" stroke-width="0.8"/><rect x="0.5" y="6" width="5" height="5.5" fill="#d8a83a"/><path d="M1.5 6V4C1.5 2 4.5 2 4.5 4V6" stroke="#8a8a8a" fill="none"/></svg><svg style="left:1060px;top:694px;" width="13" height="13" viewBox="0 0 13 13"><rect x="0.5" y="0.5" width="10" height="11" fill="#f4f4f4" stroke="#a9a9c9"/><path d="M2 3H8M2 5.5H8" stroke="#8a9ac0" stroke-width="0.8"/><path d="M5 8.5H11.5V5M11.5 8.5L9 6.5M11.5 8.5L9 10.5" stroke="#d8a83a" stroke-width="1.4" fill="none"/></svg><div style="left:1078px;top:694px;width:1px;height:14px;background:#9a9a9a"></div><svg style="left:1085px;top:694px;" width="13" height="13" viewBox="0 0 13 13"><rect x="0.5" y="4" width="10" height="8" fill="#eef6fd" stroke="#5a8fd0"/><rect x="0.5" y="4" width="10" height="2" fill="#4a7cc0"/><path d="M6 6L11 1L12.5 2.5L7.5 7.5Z" fill="#3aa557"/></svg><svg style="left:1104px;top:694px;" width="12" height="12" viewBox="0 0 12 12"><rect x="0.6" y="0.6" width="10.5" height="8" rx="1" fill="#e8eef8" stroke="#3a6cb5" stroke-width="1.3"/><rect x="2.5" y="3" width="5" height="1" fill="#6d88b8"/><rect x="3" y="9.3" width="6" height="1.8" fill="#3a6cb5"/></svg><svg style="left:1122.6px;top:698.5px;" width="7.5" height="5" viewBox="0 0 7.5 5"><path d="M0 0H7.5L3.75 4.4Z" fill="#000"/></svg><svg style="left:1137.5px;top:693.5px;" width="13" height="13" viewBox="0 0 13 13"><rect x="0.5" y="2.5" width="10" height="9.5" fill="#eef6fd" stroke="#c6ad6a"/><rect x="0.5" y="2.5" width="10" height="2" fill="#6aa6dc"/><path d="M10 0.5L11.2 2L13 2.6L11.2 3.4L10 5.2L8.8 3.4L7 2.6L8.8 2Z" fill="#d9b44a"/></svg><svg style="left:1155.8px;top:698.5px;" width="7.5" height="5" viewBox="0 0 7.5 5"><path d="M0 0H7.5L3.75 4.4Z" fill="#000"/></svg><svg style="left:1172px;top:695px;" width="10" height="5" viewBox="0 0 10 5"><rect x="0.5" y="0.5" width="8" height="3" fill="#fff" stroke="#333" stroke-width="1"/></svg><svg style="left:1190px;top:695px;" width="10" height="10" viewBox="0 0 10 10"><rect x="0.5" y="0.5" width="8" height="8" fill="#fff" stroke="#333" stroke-width="1"/><rect x="0.5" y="0.5" width="8" height="2" fill="#333"/></svg><svg style="left:1733px;top:693.5px;" width="13" height="13" viewBox="0 0 13 13"><rect x="4" y="0.5" width="8" height="10" fill="#eef3fa" stroke="#8fa9d0"/><path d="M5.5 3H10.5M5.5 5H10.5M5.5 7H10.5" stroke="#8fa9d0" stroke-width="0.7"/><path d="M0.5 9H6L4 11.5" stroke="#3d7ec4" stroke-width="1.3" fill="none"/></svg><svg style="left:1752px;top:693.5px;" width="13" height="13" viewBox="0 0 13 13"><rect x="0.5" y="0.5" width="9" height="10.5" fill="#eef3fa" stroke="#8fa9d0"/><path d="M2 3H8M2 5H8M2 7H8" stroke="#8fa9d0" stroke-width="0.7"/><path d="M7 9L9.5 11.5L12.5 8" stroke="#3d7ec4" stroke-width="1.3" fill="none"/></svg><svg style="left:1770.5px;top:698px;" width="7.5" height="5" viewBox="0 0 7.5 5"><path d="M0 0H7.5L3.75 4.4Z" fill="#000"/></svg><div style="left:1783px;top:693px;width:1px;height:15px;background:#9a9a9a"></div><svg style="left:1790px;top:693.5px;" width="13" height="13" viewBox="0 0 13 13"><rect x="0.5" y="0.5" width="8" height="10" fill="#eef3fa" stroke="#8fa9d0"/><path d="M2 3H7M2 5H7M2 7H7" stroke="#8fa9d0" stroke-width="0.7"/><path d="M8 8L12 12M12 8L8 12" stroke="#555" stroke-width="1.4"/></svg><svg style="left:1809px;top:693px;" width="13" height="13" viewBox="0 0 13 13"><path d="M1.5 1.5L11 11M11 1.5L1.5 11" stroke="#e2231a" stroke-width="3"/></svg><svg style="left:1827.5px;top:693.5px;" width="12" height="13" viewBox="0 0 12 13"><rect x="0.5" y="0.5" width="9" height="11" fill="#f6f2e0" stroke="#c8b68a"/><path d="M2 3H8M2 5H8M2 7H8" stroke="#8fa9d0" stroke-width="0.7"/></svg><svg style="left:1845.5px;top:693px;" width="14" height="13" viewBox="0 0 14 13"><rect x="0.5" y="3" width="9" height="9.5" fill="#eef3fa" stroke="#8fa9d0"/><path d="M2 6H8M2 8H8" stroke="#8fa9d0" stroke-width="0.7"/><path d="M6 5C7 1 10 1 12.5 2.5M10 0.5L12.8 2.5L10.5 5" stroke="#d8a83a" stroke-width="1.3" fill="none"/></svg><svg style="left:1869.5px;top:693.5px;" width="5" height="13" viewBox="0 0 5 13"><circle cx="2.4" cy="2" r="1.35" fill="none" stroke="#8a8a8a" stroke-width="0.9"/><circle cx="2.4" cy="6.1" r="1.35" fill="none" stroke="#8a8a8a" stroke-width="0.9"/><circle cx="2.4" cy="10.2" r="1.35" fill="none" stroke="#8a8a8a" stroke-width="0.9"/></svg><svg style="left:1886px;top:695px;" width="10" height="5" viewBox="0 0 10 5"><rect x="0.5" y="0.5" width="8" height="3" fill="#fff" stroke="#333" stroke-width="1"/></svg><svg style="left:1904px;top:695px;" width="10" height="10" viewBox="0 0 10 10"><rect x="0.5" y="0.5" width="8" height="8" fill="#fff" stroke="#333" stroke-width="1"/><rect x="0.5" y="0.5" width="8" height="2" fill="#333"/></svg><svg style="left:5px;top:73px;" width="14" height="14" viewBox="0 0 14 14"><rect x="0.5" y="0.5" width="6.5" height="8" fill="#f1f4f8" stroke="#9aa8bd" stroke-width="0.8"/><path d="M3 5H13V13H3Z" fill="#f5d77a" stroke="#c9a24a" stroke-width="0.8"/><path d="M3 5V3.5H7L8 5" fill="#f5d77a" stroke="#c9a24a" stroke-width="0.8"/></svg><svg style="left:367.2px;top:73.2px;" width="13" height="13" viewBox="0 0 13 13"><path d="M8.95 7.02L12.56 7.79M7.86 8.60L9.88 11.70M5.98 8.95L5.21 12.56M4.40 7.86L1.30 9.88M4.05 5.98L0.44 5.21M5.14 4.40L3.12 1.30M7.02 4.05L7.79 0.44M8.60 5.14L11.70 3.12" stroke="#4f8f84" stroke-width="1.3" stroke-linecap="round"/><circle cx="6.8" cy="6.8" r="3.77" fill="#3f8f9c"/><circle cx="6.6" cy="6.5" r="2.47" fill="#bfe0a8"/></svg><span class="t" style="left:1175.8px;top:76.5px;font-size:8px;line-height:8px;color:#4a96d6;font-family:'Liberation Sans',sans-serif;transform:scaleX(0.92);transform-origin:0 0">(x)=</span><svg style="left:1252px;top:73px;" width="14" height="12" viewBox="0 0 14 12"><circle cx="3.5" cy="6.5" r="2.5" fill="none" stroke="#4a96d6" stroke-width="1.2"/><circle cx="9.5" cy="6.5" r="2.5" fill="none" stroke="#4a96d6" stroke-width="1.2"/><path d="M6 6.5H7M11 2L13 0.5" stroke="#4a96d6" stroke-width="1.2"/><path d="M3 11L4 9M9 11L10 9" stroke="#4a96d6"/></svg><svg style="left:1344px;top:73.5px;" width="12" height="12" viewBox="0 0 12 12"><text x="0" y="4.8" font-size="5" font-family="Liberation Mono" fill="#4a96d6" font-weight="700" textLength="11.5">1010</text><text x="0" y="10.5" font-size="5" font-family="Liberation Mono" fill="#4a96d6" font-weight="700" textLength="11.5">0101</text></svg><svg style="left:1421px;top:73px;" width="13" height="12" viewBox="0 0 13 12"><circle cx="3.5" cy="4" r="3" fill="#3d7ec4"/><circle cx="9" cy="8" r="3" fill="#5aa0dc"/></svg><svg style="left:369px;top:296.5px;" width="10" height="12" viewBox="0 0 10 12"><path d="M0.5 0.5H6.5L9 3V11.5H0.5Z" fill="#f1f6fb" stroke="#b59a5a" stroke-width="0.9"/><path d="M6.5 0.5V3H9" fill="#e8d9a8" stroke="#b59a5a" stroke-width="0.6"/><path d="M6.8 5.3C6 4.5 3 4.5 3 7.2C3 9.8 6 9.8 6.8 9" stroke="#3a6ea8" stroke-width="1.4" fill="none"/></svg><svg style="left:496px;top:296.5px;" width="10" height="12" viewBox="0 0 10 12"><path d="M0.5 0.5H6.5L9 3V11.5H0.5Z" fill="#f1f6fb" stroke="#b59a5a" stroke-width="0.9"/><path d="M6.5 0.5V3H9" fill="#e8d9a8" stroke="#b59a5a" stroke-width="0.6"/><path d="M6.8 5.3C6 4.5 3 4.5 3 7.2C3 9.8 6 9.8 6.8 9" stroke="#3a6ea8" stroke-width="1.4" fill="none"/></svg><svg style="left:368px;top:695px;" width="12" height="12" viewBox="0 0 12 12"><rect x="0.6" y="0.6" width="10.5" height="8" rx="1" fill="#e8eef8" stroke="#3a6cb5" stroke-width="1.3"/><rect x="2.5" y="3" width="5" height="1" fill="#6d88b8"/><rect x="3" y="9.3" width="6" height="1.8" fill="#3a6cb5"/></svg><svg style="left:1215.5px;top:695px;" width="13" height="13" viewBox="0 0 13 13"><rect x="0.5" y="2" width="7" height="3.5" fill="#6cc46c" stroke="#3a9a3a" stroke-width="0.6"/><rect x="7.5" y="2" width="4" height="3.5" fill="#cde3f5" stroke="#9ab" stroke-width="0.6"/><circle cx="9" cy="9.5" r="3" fill="#3aa557"/><path d="M8 8L10.5 9.5L8 11Z" fill="#fff"/></svg><svg style="left:1290px;top:694px;" width="12" height="14" viewBox="0 0 12 14"><rect x="2.5" y="3" width="9" height="10.5" fill="#f4f4f4" stroke="#a9a9c9" stroke-width="0.8"/><circle cx="4.5" cy="4.5" r="4" fill="#e2414a"/><path d="M3 3L6 6M6 3L3 6" stroke="#fff" stroke-width="1.1"/></svg><svg style="left:9px;top:96px;" width="6" height="9" viewBox="0 0 6 9"><path d="M1 1L4.5 4.5L1 8" stroke="#8a8a8a" stroke-width="1.1" fill="none"/></svg><svg style="left:21px;top:93px;" width="15" height="14" viewBox="0 0 15 14"><path d="M0.5 4H5L6 5.5H12.5V12.5H0.5Z" fill="#f5d77a" stroke="#c9a24a" stroke-width="0.8"/><path d="M2.5 7H14.5L12.5 12.5H0.5Z" fill="#8fc0ec" stroke="#4a86c6" stroke-width="0.8"/><text x="9.5" y="5.5" font-size="6.5" font-family="Liberation Sans" font-weight="700" fill="#2e6cb5">c</text></svg><svg style="left:9px;top:114.5px;" width="6" height="9" viewBox="0 0 6 9"><path d="M1 1L4.5 4.5L1 8" stroke="#8a8a8a" stroke-width="1.1" fill="none"/></svg><svg style="left:21px;top:111.5px;" width="15" height="14" viewBox="0 0 15 14"><path d="M0.5 4H5L6 5.5H12.5V12.5H0.5Z" fill="#f5d77a" stroke="#c9a24a" stroke-width="0.8"/><path d="M2.5 7H14.5L12.5 12.5H0.5Z" fill="#8fc0ec" stroke="#4a86c6" stroke-width="0.8"/><text x="9.5" y="5.5" font-size="6.5" font-family="Liberation Sans" font-weight="700" fill="#2e6cb5">c</text></svg><svg style="left:21px;top:119px;" width="6" height="7" viewBox="0 0 6 7"><rect x="0.5" y="2.5" width="5" height="4" fill="#d8a83a"/><path d="M1.5 2.5V1.5C1.5 0 4.5 0 4.5 1.5V2.5" stroke="#8a7a5a" fill="none" stroke-width="0.8"/></svg><svg style="left:382px;top:92.5px;" width="13" height="14" viewBox="0 0 13 14"><path d="M6.5 0.5L12.5 3.5L6.5 6.5L0.5 3.5Z" fill="#ececec"/><path d="M0.5 3.5L6.5 6.5V13L0.5 10Z" fill="#c4c4c4"/><path d="M12.5 3.5L6.5 6.5V13L12.5 10Z" fill="#a9a9a9"/><path d="M6.5 0.5L12.5 3.5V10L6.5 13L0.5 10V3.5Z" fill="none" stroke="#8a8a8a" stroke-width="0.7"/><ellipse cx="6.5" cy="3.4" rx="1.5" ry="0.9" fill="#222"/><circle cx="3.4" cy="8.5" r="1.1" fill="#222"/><circle cx="9.6" cy="8.5" r="1.1" fill="#222"/></svg><svg style="left:368.5px;top:117px;" width="9" height="6" viewBox="0 0 9 6"><path d="M1 1L4.5 4.5L8 1" stroke="#555" stroke-width="1.1" fill="none"/></svg><svg style="left:382px;top:111px;" width="13" height="14" viewBox="0 0 13 14"><path d="M6.5 0.5L12.5 3.5L6.5 6.5L0.5 3.5Z" fill="#ececec"/><path d="M0.5 3.5L6.5 6.5V13L0.5 10Z" fill="#c4c4c4"/><path d="M12.5 3.5L6.5 6.5V13L12.5 10Z" fill="#a9a9a9"/><path d="M6.5 0.5L12.5 3.5V10L6.5 13L0.5 10V3.5Z" fill="none" stroke="#8a8a8a" stroke-width="0.7"/><ellipse cx="6.5" cy="3.4" rx="1.5" ry="0.9" fill="#222"/><circle cx="3.4" cy="8.5" r="1.1" fill="#222"/><circle cx="9.6" cy="8.5" r="1.1" fill="#222"/></svg><svg style="left:385px;top:135.5px;" width="9" height="6" viewBox="0 0 9 6"><path d="M1 1L4.5 4.5L8 1" stroke="#555" stroke-width="1.1" fill="none"/></svg><svg style="left:398.5px;top:130px;" width="13" height="13" viewBox="0 0 13 13"><rect x="0.5" y="6.5" width="6.5" height="5" fill="#e8c35a" stroke="#b8962a" stroke-width="0.7"/><path d="M3.7 6.5V11.5" stroke="#b8962a" stroke-width="0.7"/><circle cx="8.5" cy="5" r="3.8" fill="#f0d27a" stroke="#a9882a" stroke-width="0.9"/><circle cx="8.5" cy="5" r="1.6" fill="#c9a43a"/></svg><svg style="left:416px;top:150px;" width="10" height="10" viewBox="0 0 10 10"><rect x="0" y="1" width="10" height="1.8" fill="#3d7ec4"/><rect x="0" y="4.2" width="10" height="1.8" fill="#3d7ec4"/><rect x="0" y="7.4" width="10" height="1.8" fill="#3d7ec4"/></svg><svg style="left:416px;top:168.5px;" width="10" height="10" viewBox="0 0 10 10"><rect x="0" y="1" width="10" height="1.8" fill="#3d7ec4"/><rect x="0" y="4.2" width="10" height="1.8" fill="#3d7ec4"/><rect x="0" y="7.4" width="10" height="1.8" fill="#3d7ec4"/></svg><svg style="left:397.5px;top:185px;" width="14" height="14" viewBox="0 0 14 14"><path d="M1 9.5L5 13.5M5 9.5L1 13.5" stroke="#b0604a" stroke-width="1"/><path d="M4.5 9.5L7 7" stroke="#b08a4a"/><circle cx="9" cy="5" r="3.8" fill="#f0d27a" stroke="#a9882a" stroke-width="0.9"/><circle cx="9" cy="5" r="1.6" fill="#c9a43a"/></svg><svg style="left:0px;top:0px;pointer-events:none" width="700" height="300" viewBox="0 0 700 300"><path d="M282.87 159.38L413.94 75.94L411.44 72.08L281.73 157.62Z" fill="#ff1a1a"/><path d="M421.5 68.3L406.9 71.3L412.69 74.01L414.1 79.2Z" fill="#ff1a1a"/><circle cx="282.3" cy="158.5" r="1" fill="#ff1a1a"/></svg><div style="left:433.8px;top:39.8px;width:39.2px;height:28px;border:2.7px solid #ff0d0d;border-radius:1.5px"></div><svg style="left:1232.8px;top:782.1px;" width="9" height="10" viewBox="0 0 9 10"><path d="M4.3 0.6C4.8 0.6 5 1 5.3 1.6L8.3 7.6C8.6 8.3 8.3 9 7.5 9H1.1C0.3 9 0 8.3 0.3 7.6L3.3 1.6C3.6 1 3.8 0.6 4.3 0.6Z" fill="#f2c14e" stroke="#d9a23a" stroke-width="0.5"/><rect x="3.7" y="2.8" width="1.2" height="3.6" fill="#7a5a1a"/><rect x="3.7" y="7" width="1.2" height="1.1" fill="#7a5a1a"/></svg><svg style="left:1639.7px;top:781.6px;" width="22" height="11" viewBox="0 0 22 11"><path d="M5 0.3V9.6M5 4.6H9.2M0.3 9.6H10.8" stroke="#000" stroke-width="0.95" fill="none"/><path d="M14.3 0.2L12.6 3.2M13.1 2.4H20M11.3 5.6H21.8M16.3 2.4V10.2" stroke="#000" stroke-width="0.95" fill="none"/></svg><svg style="left:1232.8px;top:800.5500000000001px;" width="9" height="10" viewBox="0 0 9 10"><path d="M4.3 0.6C4.8 0.6 5 1 5.3 1.6L8.3 7.6C8.6 8.3 8.3 9 7.5 9H1.1C0.3 9 0 8.3 0.3 7.6L3.3 1.6C3.6 1 3.8 0.6 4.3 0.6Z" fill="#f2c14e" stroke="#d9a23a" stroke-width="0.5"/><rect x="3.7" y="2.8" width="1.2" height="3.6" fill="#7a5a1a"/><rect x="3.7" y="7" width="1.2" height="1.1" fill="#7a5a1a"/></svg><svg style="left:1639.7px;top:800.0500000000001px;" width="22" height="11" viewBox="0 0 22 11"><path d="M5 0.3V9.6M5 4.6H9.2M0.3 9.6H10.8" stroke="#000" stroke-width="0.95" fill="none"/><path d="M14.3 0.2L12.6 3.2M13.1 2.4H20M11.3 5.6H21.8M16.3 2.4V10.2" stroke="#000" stroke-width="0.95" fill="none"/></svg><svg style="left:1232.8px;top:819.0px;" width="9" height="10" viewBox="0 0 9 10"><path d="M4.3 0.6C4.8 0.6 5 1 5.3 1.6L8.3 7.6C8.6 8.3 8.3 9 7.5 9H1.1C0.3 9 0 8.3 0.3 7.6L3.3 1.6C3.6 1 3.8 0.6 4.3 0.6Z" fill="#f2c14e" stroke="#d9a23a" stroke-width="0.5"/><rect x="3.7" y="2.8" width="1.2" height="3.6" fill="#7a5a1a"/><rect x="3.7" y="7" width="1.2" height="1.1" fill="#7a5a1a"/></svg><svg style="left:1639.7px;top:818.5px;" width="22" height="11" viewBox="0 0 22 11"><path d="M5 0.3V9.6M5 4.6H9.2M0.3 9.6H10.8" stroke="#000" stroke-width="0.95" fill="none"/><path d="M14.3 0.2L12.6 3.2M13.1 2.4H20M11.3 5.6H21.8M16.3 2.4V10.2" stroke="#000" stroke-width="0.95" fill="none"/></svg><svg style="left:1232.8px;top:837.45px;" width="9" height="10" viewBox="0 0 9 10"><path d="M4.3 0.6C4.8 0.6 5 1 5.3 1.6L8.3 7.6C8.6 8.3 8.3 9 7.5 9H1.1C0.3 9 0 8.3 0.3 7.6L3.3 1.6C3.6 1 3.8 0.6 4.3 0.6Z" fill="#f2c14e" stroke="#d9a23a" stroke-width="0.5"/><rect x="3.7" y="2.8" width="1.2" height="3.6" fill="#7a5a1a"/><rect x="3.7" y="7" width="1.2" height="1.1" fill="#7a5a1a"/></svg><svg style="left:1639.7px;top:836.95px;" width="22" height="11" viewBox="0 0 22 11"><path d="M5 0.3V9.6M5 4.6H9.2M0.3 9.6H10.8" stroke="#000" stroke-width="0.95" fill="none"/><path d="M14.3 0.2L12.6 3.2M13.1 2.4H20M11.3 5.6H21.8M16.3 2.4V10.2" stroke="#000" stroke-width="0.95" fill="none"/></svg><svg style="left:1235px;top:855.8px;" width="4" height="10" viewBox="0 0 4 10"><circle cx="1.8" cy="1.3" r="1.2" fill="#3a64c8"/><path d="M0.5 3.3H2.7V8.2H3.5V9.2H0V8.2H0.8V4.3H0.5Z" fill="#3a64c8"/></svg><svg style="left:1639.7px;top:855.4px;" width="22" height="11" viewBox="0 0 22 11"><path d="M5 0.3V9.6M5 4.6H9.2M0.3 9.6H10.8" stroke="#000" stroke-width="0.95" fill="none"/><path d="M14.3 0.2L12.6 3.2M13.1 2.4H20M11.3 5.6H21.8M16.3 2.4V10.2" stroke="#000" stroke-width="0.95" fill="none"/></svg><svg style="left:1235px;top:874.25px;" width="4" height="10" viewBox="0 0 4 10"><circle cx="1.8" cy="1.3" r="1.2" fill="#3a64c8"/><path d="M0.5 3.3H2.7V8.2H3.5V9.2H0V8.2H0.8V4.3H0.5Z" fill="#3a64c8"/></svg><svg style="left:1639.7px;top:873.85px;" width="22" height="11" viewBox="0 0 22 11"><path d="M5 0.3V9.6M5 4.6H9.2M0.3 9.6H10.8" stroke="#000" stroke-width="0.95" fill="none"/><path d="M14.3 0.2L12.6 3.2M13.1 2.4H20M11.3 5.6H21.8M16.3 2.4V10.2" stroke="#000" stroke-width="0.95" fill="none"/></svg><svg style="left:1232.8px;top:892.8px;" width="9" height="10" viewBox="0 0 9 10"><path d="M4.3 0.6C4.8 0.6 5 1 5.3 1.6L8.3 7.6C8.6 8.3 8.3 9 7.5 9H1.1C0.3 9 0 8.3 0.3 7.6L3.3 1.6C3.6 1 3.8 0.6 4.3 0.6Z" fill="#f2c14e" stroke="#d9a23a" stroke-width="0.5"/><rect x="3.7" y="2.8" width="1.2" height="3.6" fill="#7a5a1a"/><rect x="3.7" y="7" width="1.2" height="1.1" fill="#7a5a1a"/></svg><svg style="left:1639.7px;top:892.3px;" width="22" height="11" viewBox="0 0 22 11"><path d="M5 0.3V9.6M5 4.6H9.2M0.3 9.6H10.8" stroke="#000" stroke-width="0.95" fill="none"/><path d="M14.3 0.2L12.6 3.2M13.1 2.4H20M11.3 5.6H21.8M16.3 2.4V10.2" stroke="#000" stroke-width="0.95" fill="none"/></svg><svg style="left:1232.8px;top:911.25px;" width="9" height="10" viewBox="0 0 9 10"><path d="M4.3 0.6C4.8 0.6 5 1 5.3 1.6L8.3 7.6C8.6 8.3 8.3 9 7.5 9H1.1C0.3 9 0 8.3 0.3 7.6L3.3 1.6C3.6 1 3.8 0.6 4.3 0.6Z" fill="#f2c14e" stroke="#d9a23a" stroke-width="0.5"/><rect x="3.7" y="2.8" width="1.2" height="3.6" fill="#7a5a1a"/><rect x="3.7" y="7" width="1.2" height="1.1" fill="#7a5a1a"/></svg><svg style="left:1639.7px;top:910.75px;" width="22" height="11" viewBox="0 0 22 11"><path d="M5 0.3V9.6M5 4.6H9.2M0.3 9.6H10.8" stroke="#000" stroke-width="0.95" fill="none"/><path d="M14.3 0.2L12.6 3.2M13.1 2.4H20M11.3 5.6H21.8M16.3 2.4V10.2" stroke="#000" stroke-width="0.95" fill="none"/></svg><svg style="left:1232.8px;top:929.7px;" width="9" height="10" viewBox="0 0 9 10"><path d="M4.3 0.6C4.8 0.6 5 1 5.3 1.6L8.3 7.6C8.6 8.3 8.3 9 7.5 9H1.1C0.3 9 0 8.3 0.3 7.6L3.3 1.6C3.6 1 3.8 0.6 4.3 0.6Z" fill="#f2c14e" stroke="#d9a23a" stroke-width="0.5"/><rect x="3.7" y="2.8" width="1.2" height="3.6" fill="#7a5a1a"/><rect x="3.7" y="7" width="1.2" height="1.1" fill="#7a5a1a"/></svg><svg style="left:1639.7px;top:929.2px;" width="22" height="11" viewBox="0 0 22 11"><path d="M5 0.3V9.6M5 4.6H9.2M0.3 9.6H10.8" stroke="#000" stroke-width="0.95" fill="none"/><path d="M14.3 0.2L12.6 3.2M13.1 2.4H20M11.3 5.6H21.8M16.3 2.4V10.2" stroke="#000" stroke-width="0.95" fill="none"/></svg><svg style="left:1232.8px;top:948.15px;" width="9" height="10" viewBox="0 0 9 10"><path d="M4.3 0.6C4.8 0.6 5 1 5.3 1.6L8.3 7.6C8.6 8.3 8.3 9 7.5 9H1.1C0.3 9 0 8.3 0.3 7.6L3.3 1.6C3.6 1 3.8 0.6 4.3 0.6Z" fill="#f2c14e" stroke="#d9a23a" stroke-width="0.5"/><rect x="3.7" y="2.8" width="1.2" height="3.6" fill="#7a5a1a"/><rect x="3.7" y="7" width="1.2" height="1.1" fill="#7a5a1a"/></svg><svg style="left:1639.7px;top:947.65px;" width="22" height="11" viewBox="0 0 22 11"><path d="M5 0.3V9.6M5 4.6H9.2M0.3 9.6H10.8" stroke="#000" stroke-width="0.95" fill="none"/><path d="M14.3 0.2L12.6 3.2M13.1 2.4H20M11.3 5.6H21.8M16.3 2.4V10.2" stroke="#000" stroke-width="0.95" fill="none"/></svg><svg style="left:1232.8px;top:966.6px;" width="9" height="10" viewBox="0 0 9 10"><path d="M4.3 0.6C4.8 0.6 5 1 5.3 1.6L8.3 7.6C8.6 8.3 8.3 9 7.5 9H1.1C0.3 9 0 8.3 0.3 7.6L3.3 1.6C3.6 1 3.8 0.6 4.3 0.6Z" fill="#f2c14e" stroke="#d9a23a" stroke-width="0.5"/><rect x="3.7" y="2.8" width="1.2" height="3.6" fill="#7a5a1a"/><rect x="3.7" y="7" width="1.2" height="1.1" fill="#7a5a1a"/></svg><svg style="left:1639.7px;top:966.1px;" width="22" height="11" viewBox="0 0 22 11"><path d="M5 0.3V9.6M5 4.6H9.2M0.3 9.6H10.8" stroke="#000" stroke-width="0.95" fill="none"/><path d="M14.3 0.2L12.6 3.2M13.1 2.4H20M11.3 5.6H21.8M16.3 2.4V10.2" stroke="#000" stroke-width="0.95" fill="none"/></svg><svg style="left:1235px;top:984.9499999999999px;" width="4" height="10" viewBox="0 0 4 10"><circle cx="1.8" cy="1.3" r="1.2" fill="#3a64c8"/><path d="M0.5 3.3H2.7V8.2H3.5V9.2H0V8.2H0.8V4.3H0.5Z" fill="#3a64c8"/></svg><svg style="left:1639.7px;top:984.55px;" width="22" height="11" viewBox="0 0 22 11"><path d="M5 0.3V9.6M5 4.6H9.2M0.3 9.6H10.8" stroke="#000" stroke-width="0.95" fill="none"/><path d="M14.3 0.2L12.6 3.2M13.1 2.4H20M11.3 5.6H21.8M16.3 2.4V10.2" stroke="#000" stroke-width="0.95" fill="none"/></svg><svg style="left:1231.8px;top:1002.8px;" width="11" height="11" viewBox="0 0 11 11"><rect x="0.5" y="0.5" width="9.5" height="9.5" fill="#e6f1fb" stroke="#8a9ac0"/><path d="M2.2 5L4.3 7.3L8.5 2.8" stroke="#2a3a6a" stroke-width="1.3" fill="none"/></svg><svg style="left:1639.7px;top:1003.0px;" width="22" height="11" viewBox="0 0 22 11"><path d="M5 0.3V9.6M5 4.6H9.2M0.3 9.6H10.8" stroke="#000" stroke-width="0.95" fill="none"/><path d="M14.3 0.2L12.6 3.2M13.1 2.4H20M11.3 5.6H21.8M16.3 2.4V10.2" stroke="#000" stroke-width="0.95" fill="none"/></svg><svg style="left:1218px;top:736.5px;" width="11" height="12" viewBox="0 0 11 12"><circle cx="6.8" cy="4.2" r="3.3" fill="none" stroke="#555" stroke-width="1.3"/><path d="M4.5 6.5L0.8 10.5" stroke="#555" stroke-width="1.5"/></svg><svg style="left:1628px;top:758.5px;" width="8" height="5" viewBox="0 0 8 5"><path d="M0.5 0.5L4 3.8L7.5 0.5" stroke="#9a9a9a" stroke-width="0.9" fill="none"/></svg><svg style="left:1906px;top:763px;" width="10" height="6" viewBox="0 0 10 6"><path d="M1 5L5 1L9 5" stroke="#5a5a5a" stroke-width="1.4" fill="none"/></svg><svg style="left:1906px;top:1005px;" width="10" height="6" viewBox="0 0 10 6"><path d="M1 1L5 5L9 1" stroke="#5a5a5a" stroke-width="1.4" fill="none"/></svg><svg style="left:1193px;top:737px;" width="10" height="6" viewBox="0 0 10 6"><path d="M1 5L5 1L9 5" stroke="#b5b5b5" stroke-width="1.4" fill="none"/></svg><svg style="left:1193px;top:989px;" width="10" height="6" viewBox="0 0 10 6"><path d="M1 1L5 5L9 1" stroke="#b5b5b5" stroke-width="1.4" fill="none"/></svg><svg style="left:1178px;top:1004px;" width="6" height="10" viewBox="0 0 6 10"><path d="M1 1L5 5L1 9" stroke="#b5b5b5" stroke-width="1.4" fill="none"/></svg><svg style="left:369px;top:1004px;" width="6" height="10" viewBox="0 0 6 10"><path d="M5 1L1 5L5 9" stroke="#b5b5b5" stroke-width="1.4" fill="none"/></svg><svg style="left:1896px;top:319px;" width="10" height="6" viewBox="0 0 10 6"><path d="M1 5L5 1L9 5" stroke="#5a5a5a" stroke-width="1.4" fill="none"/></svg><svg style="left:1896px;top:655px;" width="10" height="6" viewBox="0 0 10 6"><path d="M1 1L5 5L9 1" stroke="#5a5a5a" stroke-width="1.4" fill="none"/></svg><svg style="left:401px;top:671px;" width="6" height="10" viewBox="0 0 6 10"><path d="M5 1L1 5L5 9" stroke="#b5b5b5" stroke-width="1.4" fill="none"/></svg><svg style="left:1880px;top:671px;" width="6" height="10" viewBox="0 0 6 10"><path d="M1 1L5 5L1 9" stroke="#b5b5b5" stroke-width="1.4" fill="none"/></svg><svg style="left:1178px;top:271px;" width="6" height="10" viewBox="0 0 6 10"><path d="M5 1L1 5L5 9" stroke="#5a5a5a" stroke-width="1.4" fill="none"/></svg><svg style="left:1907px;top:271px;" width="6" height="10" viewBox="0 0 6 10"><path d="M1 1L5 5L1 9" stroke="#5a5a5a" stroke-width="1.4" fill="none"/></svg><div style="left:1912px;top:499px;width:7px;height:3px;border:1px solid #b5d69a"></div><svg style="left:822.5px;top:647.8px;" width="23" height="3" viewBox="0 0 23 3"><path d="M0.0 0.5L1.5 2.2L3.0 0.5L4.5 2.2L6.0 0.5L7.5 2.2L9.0 0.5L10.5 2.2L12.0 0.5L13.5 2.2L15.0 0.5L16.5 2.2L18.0 0.5L19.5 2.2L21.0 0.5L22.5 2.2" stroke="#f06060" stroke-width="0.8" fill="none"/></svg><svg style="left:364.5px;top:397.5px;" width="9" height="10" viewBox="0 0 9 10"><path d="M0.5 3H4V0.5L8.5 5L4 9.5V7H0.5Z" fill="#4a7ab8" stroke="#dfe9f5" stroke-width="0.6"/></svg><svg style="left:1588.2px;top:1022px;" width="2" height="14" viewBox="0 0 2 14"><rect x="0" y="0.0" width="1.4" height="1.6" fill="#c9c9c9"/><rect x="0" y="3.3" width="1.4" height="1.6" fill="#c9c9c9"/><rect x="0" y="6.6" width="1.4" height="1.6" fill="#c9c9c9"/><rect x="0" y="9.9" width="1.4" height="1.6" fill="#c9c9c9"/><rect x="0" y="13.2" width="1.4" height="1.6" fill="#c9c9c9"/></svg><svg style="left:1849.7px;top:1022px;" width="2" height="14" viewBox="0 0 2 14"><rect x="0" y="0.0" width="1.4" height="1.6" fill="#c9c9c9"/><rect x="0" y="3.3" width="1.4" height="1.6" fill="#c9c9c9"/><rect x="0" y="6.6" width="1.4" height="1.6" fill="#c9c9c9"/><rect x="0" y="9.9" width="1.4" height="1.6" fill="#c9c9c9"/><rect x="0" y="13.2" width="1.4" height="1.6" fill="#c9c9c9"/></svg><svg style="left:1877.2px;top:1022px;" width="2" height="14" viewBox="0 0 2 14"><rect x="0" y="0.0" width="1.4" height="1.6" fill="#c9c9c9"/><rect x="0" y="3.3" width="1.4" height="1.6" fill="#c9c9c9"/><rect x="0" y="6.6" width="1.4" height="1.6" fill="#c9c9c9"/><rect x="0" y="9.9" width="1.4" height="1.6" fill="#c9c9c9"/><rect x="0" y="13.2" width="1.4" height="1.6" fill="#c9c9c9"/></svg><div style="left:0px;top:0px;width:1px;height:1040px;background:#5a5a5a"></div><div style="left:1919px;top:0px;width:1px;height:24px;background:#4a4a4a"></div></body></html>
